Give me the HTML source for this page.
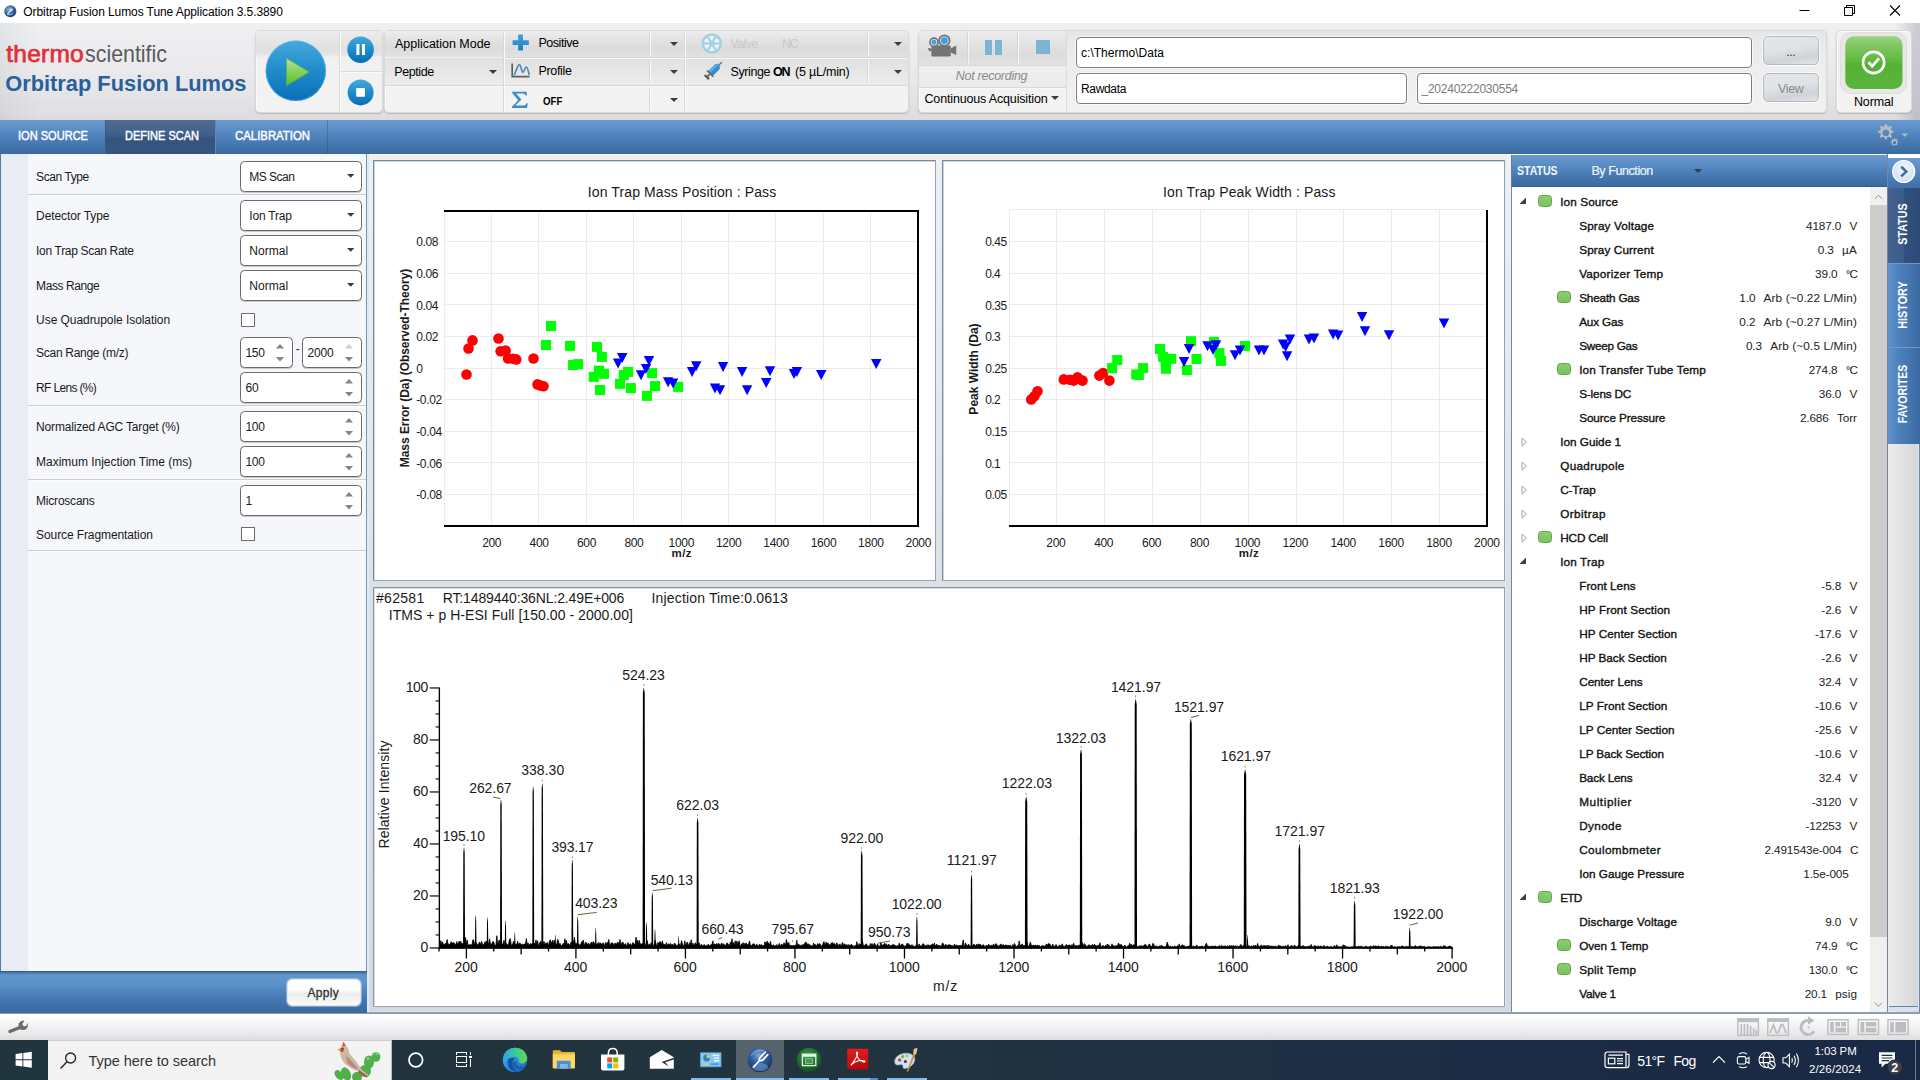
<!DOCTYPE html>
<html><head><meta charset="utf-8"><title>Orbitrap Fusion Lumos Tune Application</title>
<style>
html,body{margin:0;padding:0;}
body{width:1920px;height:1080px;overflow:hidden;position:relative;background:#eeeef0;font-family:'Liberation Sans',sans-serif;}
div,span,svg{box-sizing:border-box;}
svg{position:absolute;overflow:visible;}
</style></head><body>
<div style="position:absolute;left:0px;top:0px;width:1920px;height:23px;background:#fff;"></div>
<svg style="left:2.6px;top:3.5px" width="14.6" height="14.6" viewBox="0 0 17 17"><defs><radialGradient id="ai" cx="40%" cy="35%" r="70%"><stop offset="0" stop-color="#8fb6dd"/><stop offset="0.6" stop-color="#2e5f97"/><stop offset="1" stop-color="#1b3d6b"/></radialGradient></defs><circle cx="8.5" cy="8.5" r="7" fill="url(#ai)"/><path d="M5.5 11.5 L8 8.5 L9.5 5.5 M8 8.5 L11 6.5" stroke="#e8f0fa" stroke-width="1.2" fill="none" stroke-linecap="round"/><path d="M5 12.2 q3 1.2 6.5 -1" stroke="#cfe0f2" stroke-width="0.8" fill="none"/></svg>
<span style="position:absolute;left:23.30px;top:6.00px;font-size:12px;line-height:12px;white-space:pre;letter-spacing:-0.085px;color:#000;">Orbitrap Fusion Lumos Tune Application 3.5.3890</span>
<svg style="left:1790px;top:0" width="120" height="23" viewBox="0 0 120 23"><path d="M9.5 10.5 H19.5" stroke="#000" stroke-width="1"/><path d="M54.5 7.5 H62.5 V15.5 H54.5 Z M56.5 7.5 V5.5 H64.5 V13.5 H62.5" stroke="#000" stroke-width="1" fill="none"/><path d="M100 5.5 L110 15.5 M110 5.5 L100 15.5" stroke="#000" stroke-width="1.1"/></svg>
<div style="position:absolute;left:0px;top:23px;width:1920px;height:97px;background:linear-gradient(180deg,#eff0f2 0%,#ececee 35%,#e6e6e8 70%,#dddde0 100%);"></div>
<div style="position:absolute;left:0px;top:23px;width:1920px;height:97px;background:linear-gradient(90deg,rgba(120,125,135,.10) 0,rgba(120,125,135,0) 40px,rgba(120,125,135,0) 1895px,rgba(120,125,135,.30) 1916px);"></div>
<span style="position:absolute;left:6.30px;top:42.00px;font-size:24.5px;line-height:24.5px;white-space:pre;letter-spacing:0.222px;color:#e0303a;-webkit-text-stroke:0.75px #e0303a;">thermo</span>
<span style="position:absolute;left:85.30px;top:42.00px;font-size:24.5px;line-height:24.5px;white-space:pre;letter-spacing:0.000px;color:#5a5a5c;transform:scaleX(0.8728);transform-origin:0 0;">scientific</span>
<span style="position:absolute;left:5.20px;top:73.00px;font-size:21.8px;line-height:21.8px;white-space:pre;letter-spacing:0.015px;color:#28609b;font-weight:700;">Orbitrap Fusion Lumos</span>
<div style="position:absolute;left:255px;top:30px;width:128px;height:83px;border:1px solid #d9d9d9;border-radius:5px;background:linear-gradient(180deg,#efefef 0,#f3f3f3 100%);box-shadow:0 1px 0 #fbfbfb inset,1px 0 0 #fbfbfb inset,0 1px 1.5px rgba(0,0,0,.18);"></div>
<div style="position:absolute;left:256px;top:31px;width:126px;height:26px;background:linear-gradient(180deg,#ececec,#e0e0e0 70%,#e4e4e4 90%,#efefef);border-radius:4px 4px 0 0;"></div>
<div style="position:absolute;left:339px;top:31px;width:1px;height:81px;background:#dcdcdc;box-shadow:1px 0 0 #fafafa;"></div>
<div style="position:absolute;left:340px;top:71px;width:42px;height:1px;background:#dcdcdc;box-shadow:0 1px 0 #fafafa;"></div>
<svg style="left:262px;top:37px" width="68" height="68" viewBox="0 0 68 68"><defs>
<linearGradient id="pb" x1="0" y1="0" x2="0" y2="1"><stop offset="0" stop-color="#46a9dc"/><stop offset="0.5" stop-color="#1f8ccc"/><stop offset="1" stop-color="#0a6db6"/></linearGradient>
<linearGradient id="pg" x1="0" y1="0" x2="0" y2="1"><stop offset="0" stop-color="#b9e3a4"/><stop offset="0.55" stop-color="#7fce55"/><stop offset="1" stop-color="#5cbb2f"/></linearGradient></defs>
<circle cx="33.8" cy="33.8" r="30.2" fill="url(#pb)"/><circle cx="33.8" cy="33.8" r="29.7" fill="none" stroke="#5cc4ee" stroke-opacity=".55" stroke-width="1"/>
<path d="M24.5 21.3 L47.2 35 L24.5 48.6 Z" fill="url(#pg)" stroke="#58b733" stroke-width="0.8" stroke-linejoin="round"/></svg>
<svg style="left:346px;top:35px" width="30" height="30" viewBox="0 0 30 30"><circle cx="14.6" cy="14.7" r="13.3" fill="url(#pb)"/><rect x="10.4" y="9" width="3" height="11" fill="#fff"/><rect x="16" y="9" width="3" height="11" fill="#fff"/></svg>
<svg style="left:346px;top:78px" width="30" height="30" viewBox="0 0 30 30"><circle cx="14.6" cy="14.4" r="13" fill="url(#pb)"/><rect x="10.2" y="10" width="8.8" height="8.8" rx="0.8" fill="#fff"/></svg>
<div style="position:absolute;left:384px;top:30px;width:525px;height:83px;border:1px solid #d9d9d9;border-radius:5px;background:linear-gradient(180deg,#efefef 0,#f3f3f3 100%);box-shadow:0 1px 0 #fbfbfb inset,1px 0 0 #fbfbfb inset,0 1px 1.5px rgba(0,0,0,.18);"></div>
<div style="position:absolute;left:385px;top:31px;width:523px;height:26px;background:linear-gradient(180deg,#ededed 0,#e3e3e3 35%,#dcdcdc 62%,#dedede 85%,#e3e3e3 100%);border-radius:4px 4px 0 0;"></div>
<div style="position:absolute;left:385px;top:58px;width:523px;height:27px;background:linear-gradient(180deg,#e1e1e1,#e6e6e6 50%,#ececec);"></div>
<div style="position:absolute;left:504px;top:57px;width:404px;height:1px;background:#d6d6d6;box-shadow:0 1px 0 #f8f8f8;"></div>
<div style="position:absolute;left:385px;top:85px;width:523px;height:1px;background:#d6d6d6;box-shadow:0 1px 0 #f8f8f8;"></div>
<div style="position:absolute;left:503px;top:31px;width:1px;height:81px;background:#d8d8d8;box-shadow:1px 0 0 #fafafa;"></div>
<div style="position:absolute;left:684px;top:31px;width:1px;height:81px;background:#d8d8d8;box-shadow:1px 0 0 #fafafa;"></div>
<div style="position:absolute;left:649px;top:33px;width:1px;height:23px;background:#d8d8d8;box-shadow:1px 0 0 #fafafa;"></div>
<div style="position:absolute;left:649px;top:60px;width:1px;height:23px;background:#d8d8d8;box-shadow:1px 0 0 #fafafa;"></div>
<div style="position:absolute;left:649px;top:88px;width:1px;height:23px;background:#d8d8d8;box-shadow:1px 0 0 #fafafa;"></div>
<div style="position:absolute;left:867px;top:33px;width:1px;height:23px;background:#d8d8d8;box-shadow:1px 0 0 #fafafa;"></div>
<div style="position:absolute;left:867px;top:60px;width:1px;height:23px;background:#d8d8d8;box-shadow:1px 0 0 #fafafa;"></div>
<span style="position:absolute;left:395.00px;top:38.00px;font-size:12.5px;line-height:12.5px;white-space:pre;letter-spacing:-0.025px;color:#000;">Application Mode</span>
<span style="position:absolute;left:394.30px;top:66.00px;font-size:12.5px;line-height:12.5px;white-space:pre;letter-spacing:-0.415px;color:#000;">Peptide</span>
<svg style="left:489.2px;top:70.2px" width="8" height="4" viewBox="0 0 8 4"><path d="M0 0 H8 L4 4 Z" fill="#3c3c3c"/></svg>
<svg style="left:669.7px;top:42.0px" width="8" height="4" viewBox="0 0 8 4"><path d="M0 0 H8 L4 4 Z" fill="#3c3c3c"/></svg>
<svg style="left:669.7px;top:70.0px" width="8" height="4" viewBox="0 0 8 4"><path d="M0 0 H8 L4 4 Z" fill="#3c3c3c"/></svg>
<svg style="left:669.7px;top:97.7px" width="8" height="4" viewBox="0 0 8 4"><path d="M0 0 H8 L4 4 Z" fill="#3c3c3c"/></svg>
<svg style="left:893.7px;top:42.0px" width="8" height="4" viewBox="0 0 8 4"><path d="M0 0 H8 L4 4 Z" fill="#3c3c3c"/></svg>
<svg style="left:893.7px;top:69.5px" width="8" height="4" viewBox="0 0 8 4"><path d="M0 0 H8 L4 4 Z" fill="#3c3c3c"/></svg>
<svg style="left:512px;top:34px" width="18" height="18" viewBox="0 0 18 18"><defs><linearGradient id="pl" x1="0" y1="0" x2="0" y2="1"><stop offset="0" stop-color="#3ea2df"/><stop offset="1" stop-color="#1b7fc4"/></linearGradient></defs><path d="M6.2 0.6 H11 V6.2 H16.8 V11 H11 V16.6 H6.2 V11 H0.6 V6.2 H6.2 Z" fill="url(#pl)"/></svg>
<span style="position:absolute;left:538.50px;top:37.00px;font-size:12.5px;line-height:12.5px;white-space:pre;letter-spacing:-0.473px;color:#000;">Positive</span>
<svg style="left:510px;top:62px" width="22" height="18" viewBox="0 0 22 18"><path d="M2.2 1.6 V14.6 H19.6" stroke="#5f5f5f" stroke-width="1.7" fill="none"/><path d="M4.2 13 C6 10 7.6 2.6 9.4 2.6 C11 2.6 11.6 10.4 13 10.4 C14.2 10.4 14.8 5 16.2 5 C17.6 5 18.4 10 19.4 13" stroke="#4a86bd" stroke-width="1.6" fill="none" stroke-linejoin="round"/></svg>
<span style="position:absolute;left:538.50px;top:65.00px;font-size:12.5px;line-height:12.5px;white-space:pre;letter-spacing:-0.348px;color:#000;">Profile</span>
<svg style="left:511px;top:91px" width="18" height="18" viewBox="0 0 18 18"><path d="M1.2 0.8 H15.5 L16 4.4 H14.8 Q14.2 2.6 12 2.6 H5 L10.4 8.6 L4.4 14.6 H12.6 Q15 14.6 15.6 12.2 H16.8 L16 17 H1 V15.8 L7.2 9.2 L1.2 2 Z" fill="#3a8bc8"/></svg>
<span style="position:absolute;left:542.80px;top:96.00px;font-size:11px;line-height:11px;white-space:pre;letter-spacing:0.000px;color:#000;font-weight:700;transform:scaleX(0.8773);transform-origin:0 0;">OFF</span>
<svg style="left:700px;top:32px" width="24" height="24" viewBox="0 0 24 24"><circle cx="11.8" cy="11.5" r="9" fill="#e9f3f9" stroke="#a3cfe5" stroke-width="2.4"/><g stroke="#a3cfe5" stroke-width="2.1"><path d="M11.8 11.5 L16.4 3.6"/><path d="M11.8 11.5 L20.9 11.5"/><path d="M11.8 11.5 L16.4 19.4"/><path d="M11.8 11.5 L7.2 19.4"/><path d="M11.8 11.5 L2.7 11.5"/><path d="M11.8 11.5 L7.2 3.6"/></g><circle cx="11.8" cy="11.5" r="2.7" fill="#a3cfe5"/><circle cx="11.8" cy="11.5" r="1.2" fill="#a9dcb9"/></svg>
<span style="position:absolute;left:730.30px;top:38.00px;font-size:12.5px;line-height:12.5px;white-space:pre;letter-spacing:-0.569px;color:#c9c9c9;">Valve</span>
<span style="position:absolute;left:782.00px;top:38.00px;font-size:12.5px;line-height:12.5px;white-space:pre;letter-spacing:-1.281px;color:#c9c9c9;">NC</span>
<svg style="left:702px;top:60px" width="22" height="22" viewBox="0 0 22 22"><g transform="rotate(45 11 11)"><rect x="10.3" y="-1.5" width="1.4" height="4.5" fill="#6e6e6e"/><rect x="8.8" y="2.6" width="4.4" height="1.5" fill="#4b95cc"/><rect x="7.7" y="4" width="6.6" height="10" rx="0.8" fill="#2d8fd2"/><rect x="8.3" y="4.6" width="2" height="8.8" fill="#5eb0e4"/><rect x="6.7" y="14" width="8.6" height="1.6" fill="#5a5a5a"/><rect x="10" y="15.6" width="2" height="3.2" fill="#6e6e6e"/><rect x="8" y="18.6" width="6" height="2.2" fill="#555"/></g></svg>
<span style="position:absolute;left:730.60px;top:66.00px;font-size:12.5px;line-height:12.5px;white-space:pre;letter-spacing:-0.413px;color:#000;">Syringe</span>
<span style="position:absolute;left:773.00px;top:66.00px;font-size:12.5px;line-height:12.5px;white-space:pre;letter-spacing:-1.125px;color:#000;font-weight:700;">ON</span>
<span style="position:absolute;left:795.00px;top:66.00px;font-size:12.5px;line-height:12.5px;white-space:pre;letter-spacing:-0.203px;color:#000;">(5 µL/min)</span>
<div style="position:absolute;left:918px;top:30px;width:909px;height:83px;border:1px solid #d9d9d9;border-radius:5px;background:linear-gradient(180deg,#efefef 0,#f3f3f3 100%);box-shadow:0 1px 0 #fbfbfb inset,1px 0 0 #fbfbfb inset,0 1px 1.5px rgba(0,0,0,.18);"></div>
<div style="position:absolute;left:919px;top:31px;width:147px;height:34px;background:linear-gradient(180deg,#ececec,#e1e1e1 45%,#dcdcdc 70%,#e2e2e2);border-radius:4px 0 0 0;"></div>
<div style="position:absolute;left:919px;top:65px;width:147px;height:1px;background:#d9d9d9;box-shadow:0 1px 0 #f8f8f8;"></div>
<div style="position:absolute;left:919px;top:66px;width:147px;height:21px;background:linear-gradient(180deg,#efefef,#ebebeb);"></div>
<div style="position:absolute;left:919px;top:87px;width:147px;height:1px;background:#d9d9d9;box-shadow:0 1px 0 #f8f8f8;"></div>
<div style="position:absolute;left:967px;top:31px;width:1px;height:34px;background:#d6d6d6;box-shadow:1px 0 0 #f6f6f6;"></div>
<div style="position:absolute;left:1017px;top:31px;width:1px;height:34px;background:#d6d6d6;box-shadow:1px 0 0 #f6f6f6;"></div>
<div style="position:absolute;left:1066px;top:31px;width:1px;height:81px;background:#dcdcdc;box-shadow:1px 0 0 #fafafa;"></div>
<div style="position:absolute;left:1067px;top:31px;width:759px;height:81px;background:linear-gradient(180deg,#e6e6e6,#ededed 40%,#f1f1f1);border-radius:0 4px 4px 0;"></div>
<svg style="left:926px;top:33px" width="32" height="26" viewBox="0 0 32 26"><g fill="#737373"><circle cx="8" cy="9.2" r="4.9"/><circle cx="18.4" cy="7.6" r="6.1"/><rect x="5.4" y="12.6" width="19.4" height="11" rx="1.4"/><path d="M24.6 15.6 L30.2 12.4 V22 L24.6 19.4 Z"/><path d="M1.6 15 L5.6 15.6 V18.6 L3.2 18 Z"/></g><circle cx="8" cy="9.2" r="3.3" fill="#c4e2f6"/><circle cx="18.4" cy="7.6" r="4.4" fill="#c4e2f6"/><circle cx="8" cy="9.2" r="2.4" fill="#3d9fe0"/><circle cx="18.4" cy="7.6" r="3.4" fill="#3d9fe0"/></svg>
<div style="position:absolute;left:985px;top:39.5px;width:7px;height:15px;background:#7fb3d4;"></div>
<div style="position:absolute;left:995px;top:39.5px;width:7px;height:15px;background:#7fb3d4;"></div>
<div style="position:absolute;left:1036px;top:40px;width:14px;height:14px;background:#7fb3d4;"></div>
<span style="position:absolute;left:955.75px;top:70.00px;font-size:12.5px;line-height:12.5px;white-space:pre;letter-spacing:-0.273px;color:#8a8a8a;font-style:italic;">Not recording</span>
<span style="position:absolute;left:924.50px;top:93.00px;font-size:12.5px;line-height:12.5px;white-space:pre;letter-spacing:-0.158px;color:#000;">Continuous Acquisition</span>
<svg style="left:1051.3px;top:96.3px" width="8" height="4" viewBox="0 0 8 4"><path d="M0 0 H8 L4 4 Z" fill="#3c3c3c"/></svg>
<div style="position:absolute;left:1076px;top:37px;width:676px;height:31px;background:#fff;border:1px solid #7f7f7f;border-radius:4px;box-shadow:0 0 0 1px rgba(255,255,255,.6);"></div>
<div style="position:absolute;left:1076px;top:73px;width:331px;height:31px;background:#fff;border:1px solid #7f7f7f;border-radius:4px;box-shadow:0 0 0 1px rgba(255,255,255,.6);"></div>
<div style="position:absolute;left:1417px;top:73px;width:335px;height:31px;background:#fff;border:1px solid #7f7f7f;border-radius:4px;box-shadow:0 0 0 1px rgba(255,255,255,.6);"></div>
<span style="position:absolute;left:1081.00px;top:47.00px;font-size:12px;line-height:12px;white-space:pre;letter-spacing:0.021px;color:#000;">c:\Thermo\Data</span>
<span style="position:absolute;left:1081.00px;top:83.00px;font-size:12px;line-height:12px;white-space:pre;letter-spacing:-0.339px;color:#000;">Rawdata</span>
<span style="position:absolute;left:1421.50px;top:83.00px;font-size:12px;line-height:12px;white-space:pre;letter-spacing:-0.241px;color:#7b7b7b;">_20240222030554</span>
<div style="position:absolute;left:1763px;top:36px;width:56px;height:29px;border:1px solid #b5bac1;border-radius:5px;background:linear-gradient(170deg,#e4e7ea 0,#dfe2e6 45%,#cfd3d8 75%,#e2e5e8 100%);box-shadow:0 0 0 1px rgba(255,255,255,.7);"></div>
<div style="position:absolute;left:1763px;top:73px;width:56px;height:29px;border:1px solid #b5bac1;border-radius:5px;background:linear-gradient(170deg,#e4e7ea 0,#dfe2e6 45%,#cfd3d8 75%,#e2e5e8 100%);box-shadow:0 0 0 1px rgba(255,255,255,.7);"></div>
<span style="position:absolute;left:1786.30px;top:46.00px;font-size:12px;line-height:12px;white-space:pre;letter-spacing:-0.339px;color:#333;">...</span>
<span style="position:absolute;left:1778.05px;top:83.00px;font-size:12.5px;line-height:12.5px;white-space:pre;letter-spacing:-0.344px;color:#8a8a8a;">View</span>
<div style="position:absolute;left:1836px;top:30px;width:76px;height:83px;border:1px solid #d9d9d9;border-radius:5px;background:linear-gradient(180deg,#efefef 0,#f3f3f3 100%);box-shadow:0 1px 0 #fbfbfb inset,1px 0 0 #fbfbfb inset,0 1px 1.5px rgba(0,0,0,.18);"></div>
<div style="position:absolute;left:1840px;top:32px;width:67px;height:62px;border-radius:11px;background:#e7e7e7;border:1px solid #dedede;"></div>
<svg style="left:1845px;top:36px" width="58" height="54" viewBox="0 0 58 54"><defs><linearGradient id="ng" x1="0" y1="0" x2="0" y2="1"><stop offset="0" stop-color="#9ed488"/><stop offset="0.12" stop-color="#86ca6a"/><stop offset="0.5" stop-color="#5cb73a"/><stop offset="0.52" stop-color="#54b232"/><stop offset="1" stop-color="#5db53e"/></linearGradient></defs><rect x="0.3" y="0.3" width="57.2" height="52.6" rx="8.5" fill="url(#ng)"/><circle cx="28.6" cy="26.5" r="10.6" fill="none" stroke="#fff" stroke-width="2.6"/><path d="M23.4 26.3 L27.2 30.2 L34 22.4" stroke="#fff" stroke-width="2.7" fill="none"/></svg>
<span style="position:absolute;left:1853.95px;top:96.00px;font-size:12.5px;line-height:12.5px;white-space:pre;letter-spacing:-0.133px;color:#000;">Normal</span>
<div style="position:absolute;left:0px;top:120px;width:1920px;height:34px;background:linear-gradient(180deg,#6a9bd0 0,#5b8fc7 25%,#4a7db6 60%,#39699f 100%);"></div>
<div style="position:absolute;left:106px;top:120px;width:109px;height:34px;background:linear-gradient(180deg,#506c92 0,#3f5e89 45%,#34547e 55%,#36567f 100%);"></div>
<div style="position:absolute;left:105px;top:120px;width:1px;height:34px;background:#365a8a;"></div>
<div style="position:absolute;left:215px;top:120px;width:1px;height:34px;background:#5d88bb;"></div>
<div style="position:absolute;left:327px;top:120px;width:1px;height:34px;background:rgba(40,70,110,.35);"></div>
<span style="position:absolute;left:18.40px;top:130.00px;font-size:12.5px;line-height:12.5px;white-space:pre;letter-spacing:0.000px;color:#fff;-webkit-text-stroke:0.45px #fff;transform:scaleX(0.8840);transform-origin:0 0;">ION SOURCE</span>
<span style="position:absolute;left:124.50px;top:130.00px;font-size:12.5px;line-height:12.5px;white-space:pre;letter-spacing:0.000px;color:#fff;-webkit-text-stroke:0.45px #fff;transform:scaleX(0.8805);transform-origin:0 0;">DEFINE SCAN</span>
<span style="position:absolute;left:234.60px;top:130.00px;font-size:12.5px;line-height:12.5px;white-space:pre;letter-spacing:0.000px;color:#fff;-webkit-text-stroke:0.45px #fff;transform:scaleX(0.9100);transform-origin:0 0;">CALIBRATION</span>
<svg style="left:1874px;top:122px" width="40" height="30" viewBox="0 0 40 30"><g fill="#b7bcbf"><path d="M11 2 l1.6 0 l.5 2.1 l1.7 .7 l1.9-1.1 l1.2 1.2 l-1.1 1.9 l.7 1.7 l2.1 .5 l0 1.6 l-2.1 .5 l-.7 1.7 l1.1 1.9 l-1.2 1.2 l-1.9-1.1 l-1.7 .7 l-.5 2.1 l-1.6 0 l-.5-2.1 l-1.7-.7 l-1.9 1.1 l-1.2-1.2 l1.1-1.9 l-.7-1.7 l-2.1-.5 l0-1.6 l2.1-.5 l.7-1.7 l-1.1-1.9 l1.2-1.2 l1.9 1.1 l1.7-.7 Z M11.8 7.4 a3.4 3.4 0 1 0 .01 0 Z" fill-rule="evenodd"/><g transform="translate(14.6,15.2) scale(0.5)"><path d="M11 2 l1.6 0 l.5 2.1 l1.7 .7 l1.9-1.1 l1.2 1.2 l-1.1 1.9 l.7 1.7 l2.1 .5 l0 1.6 l-2.1 .5 l-.7 1.7 l1.1 1.9 l-1.2 1.2 l-1.9-1.1 l-1.7 .7 l-.5 2.1 l-1.6 0 l-.5-2.1 l-1.7-.7 l-1.9 1.1 l-1.2-1.2 l1.1-1.9 l-.7-1.7 l-2.1-.5 l0-1.6 l2.1-.5 l.7-1.7 l-1.1-1.9 l1.2-1.2 l1.9 1.1 l1.7-.7 Z M11.8 7.4 a3.4 3.4 0 1 0 .01 0 Z" fill-rule="evenodd"/></g><path d="M27.5 11.6 H34 L30.7 14.8 Z"/></g></svg>
<div style="position:absolute;left:0px;top:154px;width:367px;height:817px;background:#f5f7fa;border-left:1px solid #4a7cb5;border-right:1px solid #7c93ad;"></div>
<div style="position:absolute;left:1px;top:154px;width:27px;height:817px;background:#e9ecf2;"></div>
<div style="position:absolute;left:367px;top:154px;width:2px;height:859px;background:#dcebfa;"></div>
<span style="position:absolute;left:36.10px;top:171.00px;font-size:12px;line-height:12px;white-space:pre;letter-spacing:-0.420px;color:#1a1a1a;">Scan Type</span>
<span style="position:absolute;left:36.10px;top:210.00px;font-size:12px;line-height:12px;white-space:pre;letter-spacing:-0.099px;color:#1a1a1a;">Detector Type</span>
<span style="position:absolute;left:36.10px;top:245.00px;font-size:12px;line-height:12px;white-space:pre;letter-spacing:-0.323px;color:#1a1a1a;">Ion Trap Scan Rate</span>
<span style="position:absolute;left:36.10px;top:280.00px;font-size:12px;line-height:12px;white-space:pre;letter-spacing:-0.417px;color:#1a1a1a;">Mass Range</span>
<span style="position:absolute;left:36.10px;top:314.00px;font-size:12px;line-height:12px;white-space:pre;letter-spacing:-0.059px;color:#1a1a1a;">Use Quadrupole Isolation</span>
<span style="position:absolute;left:36.10px;top:347.00px;font-size:12px;line-height:12px;white-space:pre;letter-spacing:-0.294px;color:#1a1a1a;">Scan Range (m/z)</span>
<span style="position:absolute;left:36.10px;top:382.00px;font-size:12px;line-height:12px;white-space:pre;letter-spacing:-0.669px;color:#1a1a1a;">RF Lens (%)</span>
<span style="position:absolute;left:36.10px;top:421.00px;font-size:12px;line-height:12px;white-space:pre;letter-spacing:-0.173px;color:#1a1a1a;">Normalized AGC Target (%)</span>
<span style="position:absolute;left:36.10px;top:456.00px;font-size:12px;line-height:12px;white-space:pre;letter-spacing:-0.026px;color:#1a1a1a;">Maximum Injection Time (ms)</span>
<span style="position:absolute;left:36.10px;top:495.00px;font-size:12px;line-height:12px;white-space:pre;letter-spacing:-0.219px;color:#1a1a1a;">Microscans</span>
<span style="position:absolute;left:36.10px;top:529.00px;font-size:12px;line-height:12px;white-space:pre;letter-spacing:-0.102px;color:#1a1a1a;">Source Fragmentation</span>
<div style="position:absolute;left:28px;top:194px;width:338px;height:1px;background:#c9ccd1;box-shadow:0 1px 0 #fbfcfd;"></div>
<div style="position:absolute;left:28px;top:405px;width:338px;height:1px;background:#c9ccd1;box-shadow:0 1px 0 #fbfcfd;"></div>
<div style="position:absolute;left:28px;top:479px;width:338px;height:1px;background:#c9ccd1;box-shadow:0 1px 0 #fbfcfd;"></div>
<div style="position:absolute;left:28px;top:550px;width:338px;height:1px;background:#c9ccd1;box-shadow:0 1px 0 #fbfcfd;"></div>
<div style="position:absolute;left:240px;top:161px;width:122px;height:31px;background:#fff;border:1px solid #6a6a6a;border-radius:4.5px;box-shadow:0 1px 0.5px rgba(0,0,0,.18);"></div>
<span style="position:absolute;left:249.30px;top:171.00px;font-size:12px;line-height:12px;white-space:pre;letter-spacing:-0.527px;color:#1a1a1a;">MS Scan</span>
<svg style="left:347.3px;top:174.29999999999998px" width="7.4" height="3.8" viewBox="0 0 7.4 3.8"><path d="M0 0 H7.4 L3.7 3.8 Z" fill="#3c3c3c"/></svg>
<div style="position:absolute;left:240px;top:200px;width:122px;height:31px;background:#fff;border:1px solid #6a6a6a;border-radius:4.5px;box-shadow:0 1px 0.5px rgba(0,0,0,.18);"></div>
<span style="position:absolute;left:249.30px;top:210.00px;font-size:12px;line-height:12px;white-space:pre;letter-spacing:-0.191px;color:#1a1a1a;">Ion Trap</span>
<svg style="left:347.3px;top:213.29999999999998px" width="7.4" height="3.8" viewBox="0 0 7.4 3.8"><path d="M0 0 H7.4 L3.7 3.8 Z" fill="#3c3c3c"/></svg>
<div style="position:absolute;left:240px;top:235px;width:122px;height:31px;background:#fff;border:1px solid #6a6a6a;border-radius:4.5px;box-shadow:0 1px 0.5px rgba(0,0,0,.18);"></div>
<span style="position:absolute;left:249.30px;top:245.00px;font-size:12px;line-height:12px;white-space:pre;letter-spacing:0.055px;color:#1a1a1a;">Normal</span>
<svg style="left:347.3px;top:248.29999999999998px" width="7.4" height="3.8" viewBox="0 0 7.4 3.8"><path d="M0 0 H7.4 L3.7 3.8 Z" fill="#3c3c3c"/></svg>
<div style="position:absolute;left:240px;top:270px;width:122px;height:31px;background:#fff;border:1px solid #6a6a6a;border-radius:4.5px;box-shadow:0 1px 0.5px rgba(0,0,0,.18);"></div>
<span style="position:absolute;left:249.30px;top:280.00px;font-size:12px;line-height:12px;white-space:pre;letter-spacing:0.055px;color:#1a1a1a;">Normal</span>
<svg style="left:347.3px;top:283.3px" width="7.4" height="3.8" viewBox="0 0 7.4 3.8"><path d="M0 0 H7.4 L3.7 3.8 Z" fill="#3c3c3c"/></svg>
<div style="position:absolute;left:241px;top:312.5px;width:14px;height:14px;background:#fff;border:1px solid #6a6a6a;"></div>
<div style="position:absolute;left:241px;top:527px;width:14px;height:14px;background:#fff;border:1px solid #6a6a6a;"></div>
<div style="position:absolute;left:240px;top:337px;width:53px;height:31px;background:#fff;border:1px solid #6a6a6a;border-radius:4.5px;box-shadow:0 1px 0.5px rgba(0,0,0,.18);"></div>
<span style="position:absolute;left:245.50px;top:347.00px;font-size:12px;line-height:12px;white-space:pre;letter-spacing:-0.344px;color:#1a1a1a;">150</span>
<svg style="left:276px;top:343.95px" width="8" height="4.5" viewBox="0 0 8 4.5"><path d="M0 4.5 H8 L4 0 Z" fill="#858585"/></svg>
<svg style="left:276px;top:356.95px" width="8" height="4.5" viewBox="0 0 8 4.5"><path d="M0 0 H8 L4 4.5 Z" fill="#858585"/></svg>
<div style="position:absolute;left:302px;top:337px;width:60px;height:31px;background:#fff;border:1px solid #6a6a6a;border-radius:4.5px;box-shadow:0 1px 0.5px rgba(0,0,0,.18);"></div>
<span style="position:absolute;left:307.50px;top:347.00px;font-size:12px;line-height:12px;white-space:pre;letter-spacing:-0.176px;color:#1a1a1a;">2000</span>
<svg style="left:345px;top:343.95px" width="8" height="4.5" viewBox="0 0 8 4.5"><path d="M0 4.5 H8 L4 0 Z" fill="#cfcfcf"/></svg>
<svg style="left:345px;top:356.95px" width="8" height="4.5" viewBox="0 0 8 4.5"><path d="M0 0 H8 L4 4.5 Z" fill="#858585"/></svg>
<span style="position:absolute;left:295.72px;top:343.00px;font-size:12px;line-height:12px;white-space:pre;letter-spacing:-0.240px;color:#333;">-</span>
<div style="position:absolute;left:240px;top:372px;width:122px;height:31px;background:#fff;border:1px solid #6a6a6a;border-radius:4.5px;box-shadow:0 1px 0.5px rgba(0,0,0,.18);"></div>
<span style="position:absolute;left:245.50px;top:382.00px;font-size:12px;line-height:12px;white-space:pre;letter-spacing:-0.180px;color:#1a1a1a;">60</span>
<svg style="left:345px;top:378.95px" width="8" height="4.5" viewBox="0 0 8 4.5"><path d="M0 4.5 H8 L4 0 Z" fill="#858585"/></svg>
<svg style="left:345px;top:391.95px" width="8" height="4.5" viewBox="0 0 8 4.5"><path d="M0 0 H8 L4 4.5 Z" fill="#858585"/></svg>
<div style="position:absolute;left:240px;top:411px;width:122px;height:31px;background:#fff;border:1px solid #6a6a6a;border-radius:4.5px;box-shadow:0 1px 0.5px rgba(0,0,0,.18);"></div>
<span style="position:absolute;left:245.50px;top:421.00px;font-size:12px;line-height:12px;white-space:pre;letter-spacing:-0.344px;color:#1a1a1a;">100</span>
<svg style="left:345px;top:417.95px" width="8" height="4.5" viewBox="0 0 8 4.5"><path d="M0 4.5 H8 L4 0 Z" fill="#858585"/></svg>
<svg style="left:345px;top:430.95px" width="8" height="4.5" viewBox="0 0 8 4.5"><path d="M0 0 H8 L4 4.5 Z" fill="#858585"/></svg>
<div style="position:absolute;left:240px;top:446px;width:122px;height:31px;background:#fff;border:1px solid #6a6a6a;border-radius:4.5px;box-shadow:0 1px 0.5px rgba(0,0,0,.18);"></div>
<span style="position:absolute;left:245.50px;top:456.00px;font-size:12px;line-height:12px;white-space:pre;letter-spacing:-0.344px;color:#1a1a1a;">100</span>
<svg style="left:345px;top:452.95px" width="8" height="4.5" viewBox="0 0 8 4.5"><path d="M0 4.5 H8 L4 0 Z" fill="#858585"/></svg>
<svg style="left:345px;top:465.95px" width="8" height="4.5" viewBox="0 0 8 4.5"><path d="M0 0 H8 L4 4.5 Z" fill="#858585"/></svg>
<div style="position:absolute;left:240px;top:485px;width:122px;height:31px;background:#fff;border:1px solid #6a6a6a;border-radius:4.5px;box-shadow:0 1px 0.5px rgba(0,0,0,.18);"></div>
<span style="position:absolute;left:245.50px;top:495.00px;font-size:12px;line-height:12px;white-space:pre;letter-spacing:-1.688px;color:#1a1a1a;">1</span>
<svg style="left:345px;top:491.95px" width="8" height="4.5" viewBox="0 0 8 4.5"><path d="M0 4.5 H8 L4 0 Z" fill="#858585"/></svg>
<svg style="left:345px;top:504.95px" width="8" height="4.5" viewBox="0 0 8 4.5"><path d="M0 0 H8 L4 4.5 Z" fill="#858585"/></svg>
<div style="position:absolute;left:0px;top:971px;width:367px;height:42px;background:linear-gradient(180deg,#3f6fa8 0,#6196cd 3px,#5b90c8 30%,#4579b3 65%,#38689f 100%);border-top:1px solid #2f5f98;"></div>
<div style="position:absolute;left:286.5px;top:979px;width:74px;height:26.5px;background:linear-gradient(180deg,#fff 0,#fdfdfd 40%,#ececec 55%,#fafafa 100%);border:1px solid #dfe5ec;border-radius:5px;box-shadow:0 0 0 1px rgba(255,255,255,.35);"></div>
<span style="position:absolute;left:307.55px;top:987.00px;font-size:12px;line-height:12px;white-space:pre;letter-spacing:0.294px;color:#333;-webkit-text-stroke:0.3px #333;">Apply</span>
<div style="position:absolute;left:369px;top:154px;width:1142px;height:859px;background:linear-gradient(180deg,#f0f0f2 0,#e9e9eb 25%,#dfe0e2 50%,#dbdcdf 75%,#d8d9dc 100%);"></div>
<div style="position:absolute;left:369px;top:154px;width:1518px;height:1px;background:#f6f8fb;"></div>
<div style="position:absolute;left:369px;top:1011px;width:1142px;height:1px;background:#d6e4f4;"></div>
<div style="position:absolute;left:373px;top:160px;width:563px;height:421px;background:#fff;border:1px solid #6f8aa8;border-right-color:#8fa3ba;border-bottom-color:#96a7bb;box-shadow:1px 1px 0 #c9d6e4 inset;"></div>
<div style="position:absolute;left:942px;top:160px;width:563px;height:421px;background:#fff;border:1px solid #6f8aa8;border-right-color:#8fa3ba;border-bottom-color:#96a7bb;box-shadow:1px 1px 0 #c9d6e4 inset;"></div>
<span style="position:absolute;left:587.80px;top:185.00px;font-size:14px;line-height:14px;white-space:pre;letter-spacing:0.114px;color:#1a1a1a;">Ion Trap Mass Position : Pass</span>
<span style="position:absolute;left:1163.00px;top:185.00px;font-size:14px;line-height:14px;white-space:pre;letter-spacing:0.110px;color:#1a1a1a;">Ion Trap Peak Width : Pass</span>
<svg style="left:0;top:0" width="1920" height="600" viewBox="0 0 1920 600" shape-rendering="crispEdges"><rect x="444" y="210" width="1" height="316" fill="#ebebed"/><rect x="491" y="210" width="1" height="316" fill="#ebebed"/><rect x="538" y="210" width="1" height="316" fill="#ebebed"/><rect x="586" y="210" width="1" height="316" fill="#ebebed"/><rect x="633" y="210" width="1" height="316" fill="#ebebed"/><rect x="681" y="210" width="1" height="316" fill="#ebebed"/><rect x="728" y="210" width="1" height="316" fill="#ebebed"/><rect x="775" y="210" width="1" height="316" fill="#ebebed"/><rect x="823" y="210" width="1" height="316" fill="#ebebed"/><rect x="870" y="210" width="1" height="316" fill="#ebebed"/><rect x="444" y="494" width="474" height="1" fill="#ebebed"/><rect x="444" y="462" width="474" height="1" fill="#ebebed"/><rect x="444" y="431" width="474" height="1" fill="#ebebed"/><rect x="444" y="399" width="474" height="1" fill="#ebebed"/><rect x="444" y="368" width="474" height="1" fill="#ebebed"/><rect x="444" y="336" width="474" height="1" fill="#ebebed"/><rect x="444" y="304" width="474" height="1" fill="#ebebed"/><rect x="444" y="273" width="474" height="1" fill="#ebebed"/><rect x="444" y="241" width="474" height="1" fill="#ebebed"/><rect x="444" y="210" width="475" height="2" fill="#000"/><rect x="917" y="210" width="2" height="317" fill="#000"/><rect x="444" y="525" width="475" height="2" fill="#000"/></svg>
<svg style="left:0;top:0" width="1920" height="600" viewBox="0 0 1920 600"><circle cx="472.5" cy="340.4" r="5.3" fill="#ff0000"/><circle cx="468.5" cy="348.5" r="5.3" fill="#ff0000"/><circle cx="466.5" cy="374.5" r="5.3" fill="#ff0000"/><circle cx="498.5" cy="338.5" r="5.3" fill="#ff0000"/><circle cx="500.6" cy="351.2" r="5.3" fill="#ff0000"/><circle cx="505.6" cy="350.6" r="5.3" fill="#ff0000"/><circle cx="508.1" cy="358.5" r="5.3" fill="#ff0000"/><circle cx="513.1" cy="358.8" r="5.3" fill="#ff0000"/><circle cx="516.2" cy="359.4" r="5.3" fill="#ff0000"/><circle cx="533.5" cy="358.5" r="5.3" fill="#ff0000"/><circle cx="537.5" cy="384.4" r="5.3" fill="#ff0000"/><circle cx="540.6" cy="385.6" r="5.3" fill="#ff0000"/><circle cx="543.5" cy="386.2" r="5.3" fill="#ff0000"/><rect x="546.0" y="321.0" width="10" height="10" fill="#00ff00"/><rect x="541.0" y="340.0" width="10" height="10" fill="#00ff00"/><rect x="565.0" y="340.9" width="10" height="10" fill="#00ff00"/><rect x="592.0" y="341.9" width="10" height="10" fill="#00ff00"/><rect x="596.9" y="351.9" width="10" height="10" fill="#00ff00"/><rect x="568.1" y="360.0" width="10" height="10" fill="#00ff00"/><rect x="573.1" y="359.1" width="10" height="10" fill="#00ff00"/><rect x="594.0" y="365.6" width="10" height="10" fill="#00ff00"/><rect x="588.8" y="371.9" width="10" height="10" fill="#00ff00"/><rect x="599.0" y="368.8" width="10" height="10" fill="#00ff00"/><rect x="595.0" y="385.0" width="10" height="10" fill="#00ff00"/><rect x="615.0" y="378.8" width="10" height="10" fill="#00ff00"/><rect x="618.8" y="370.0" width="10" height="10" fill="#00ff00"/><rect x="623.1" y="366.9" width="10" height="10" fill="#00ff00"/><rect x="625.9" y="383.1" width="10" height="10" fill="#00ff00"/><rect x="641.9" y="390.9" width="10" height="10" fill="#00ff00"/><rect x="650.0" y="381.0" width="10" height="10" fill="#00ff00"/><rect x="647.1" y="368.1" width="10" height="10" fill="#00ff00"/><rect x="673.1" y="381.9" width="10" height="10" fill="#00ff00"/><path d="M617.0 353.1 H627.5 L622.2 363.1 Z" fill="#0000ff"/><path d="M612.9 358.4 H623.3 L618.1 368.4 Z" fill="#0000ff"/><path d="M643.8 356.0 H654.2 L649.0 366.0 Z" fill="#0000ff"/><path d="M640.8 364.1 H651.2 L646.0 374.1 Z" fill="#0000ff"/><path d="M635.8 370.2 H646.2 L641.0 380.2 Z" fill="#0000ff"/><path d="M662.9 377.2 H673.3 L668.1 387.2 Z" fill="#0000ff"/><path d="M667.9 378.4 H678.3 L673.1 388.4 Z" fill="#0000ff"/><path d="M691.0 361.2 H701.5 L696.2 371.2 Z" fill="#0000ff"/><path d="M686.9 367.1 H697.3 L692.1 377.1 Z" fill="#0000ff"/><path d="M717.9 362.0 H728.3 L723.1 372.0 Z" fill="#0000ff"/><path d="M736.9 367.1 H747.3 L742.1 377.1 Z" fill="#0000ff"/><path d="M764.8 366.2 H775.2 L770.0 376.2 Z" fill="#0000ff"/><path d="M761.0 378.1 H771.5 L766.2 388.1 Z" fill="#0000ff"/><path d="M709.8 383.4 H720.2 L715.0 393.4 Z" fill="#0000ff"/><path d="M714.8 385.2 H725.2 L720.0 395.2 Z" fill="#0000ff"/><path d="M741.9 385.2 H752.3 L747.1 395.2 Z" fill="#0000ff"/><path d="M791.7 367.1 H802.1 L796.9 377.1 Z" fill="#0000ff"/><path d="M788.8 369.0 H799.2 L794.0 379.0 Z" fill="#0000ff"/><path d="M816.0 370.1 H826.5 L821.2 380.1 Z" fill="#0000ff"/><path d="M871.0 359.0 H881.5 L876.2 369.0 Z" fill="#0000ff"/></svg>
<span style="position:absolute;left:416.20px;top:489.00px;font-size:12px;line-height:12px;white-space:pre;letter-spacing:-0.332px;color:#1a1a1a;">-0.08</span>
<span style="position:absolute;left:416.20px;top:458.00px;font-size:12px;line-height:12px;white-space:pre;letter-spacing:-0.332px;color:#1a1a1a;">-0.06</span>
<span style="position:absolute;left:416.20px;top:426.00px;font-size:12px;line-height:12px;white-space:pre;letter-spacing:-0.332px;color:#1a1a1a;">-0.04</span>
<span style="position:absolute;left:416.20px;top:394.00px;font-size:12px;line-height:12px;white-space:pre;letter-spacing:-0.332px;color:#1a1a1a;">-0.02</span>
<span style="position:absolute;left:416.20px;top:363.00px;font-size:12px;line-height:12px;white-space:pre;letter-spacing:-0.388px;color:#1a1a1a;">0</span>
<span style="position:absolute;left:416.20px;top:331.00px;font-size:12px;line-height:12px;white-space:pre;letter-spacing:-0.340px;color:#1a1a1a;">0.02</span>
<span style="position:absolute;left:416.20px;top:300.00px;font-size:12px;line-height:12px;white-space:pre;letter-spacing:-0.340px;color:#1a1a1a;">0.04</span>
<span style="position:absolute;left:416.20px;top:268.00px;font-size:12px;line-height:12px;white-space:pre;letter-spacing:-0.340px;color:#1a1a1a;">0.06</span>
<span style="position:absolute;left:416.20px;top:236.00px;font-size:12px;line-height:12px;white-space:pre;letter-spacing:-0.340px;color:#1a1a1a;">0.08</span>
<span style="position:absolute;left:482.20px;top:537.00px;font-size:12px;line-height:12px;white-space:pre;letter-spacing:-0.344px;color:#1a1a1a;">200</span>
<span style="position:absolute;left:529.60px;top:537.00px;font-size:12px;line-height:12px;white-space:pre;letter-spacing:-0.344px;color:#1a1a1a;">400</span>
<span style="position:absolute;left:577.00px;top:537.00px;font-size:12px;line-height:12px;white-space:pre;letter-spacing:-0.344px;color:#1a1a1a;">600</span>
<span style="position:absolute;left:624.40px;top:537.00px;font-size:12px;line-height:12px;white-space:pre;letter-spacing:-0.344px;color:#1a1a1a;">800</span>
<span style="position:absolute;left:668.50px;top:537.00px;font-size:12px;line-height:12px;white-space:pre;letter-spacing:-0.276px;color:#1a1a1a;">1000</span>
<span style="position:absolute;left:715.90px;top:537.00px;font-size:12px;line-height:12px;white-space:pre;letter-spacing:-0.276px;color:#1a1a1a;">1200</span>
<span style="position:absolute;left:763.30px;top:537.00px;font-size:12px;line-height:12px;white-space:pre;letter-spacing:-0.276px;color:#1a1a1a;">1400</span>
<span style="position:absolute;left:810.70px;top:537.00px;font-size:12px;line-height:12px;white-space:pre;letter-spacing:-0.276px;color:#1a1a1a;">1600</span>
<span style="position:absolute;left:858.10px;top:537.00px;font-size:12px;line-height:12px;white-space:pre;letter-spacing:-0.276px;color:#1a1a1a;">1800</span>
<span style="position:absolute;left:905.50px;top:537.00px;font-size:12px;line-height:12px;white-space:pre;letter-spacing:-0.276px;color:#1a1a1a;">2000</span>
<span style="position:absolute;left:671.55px;top:548.00px;font-size:11.5px;line-height:11.5px;white-space:pre;letter-spacing:0.443px;color:#1a1a1a;font-weight:700;">m/z</span>
<div style="position:absolute;left:295.2px;top:360.5px;width:220px;height:14px;transform:rotate(-90deg);text-align:center;font-size:12px;line-height:14px;font-weight:700;color:#1a1a1a;white-space:nowrap;letter-spacing:-0.05px">Mass Error (Da) (Observed-Theory)</div>
<svg style="left:0;top:0" width="1920" height="600" viewBox="0 0 1920 600" shape-rendering="crispEdges"><rect x="1009" y="210" width="1" height="316" fill="#ebebed"/><rect x="1056" y="210" width="1" height="316" fill="#ebebed"/><rect x="1104" y="210" width="1" height="316" fill="#ebebed"/><rect x="1152" y="210" width="1" height="316" fill="#ebebed"/><rect x="1200" y="210" width="1" height="316" fill="#ebebed"/><rect x="1248" y="210" width="1" height="316" fill="#ebebed"/><rect x="1296" y="210" width="1" height="316" fill="#ebebed"/><rect x="1343" y="210" width="1" height="316" fill="#ebebed"/><rect x="1391" y="210" width="1" height="316" fill="#ebebed"/><rect x="1439" y="210" width="1" height="316" fill="#ebebed"/><rect x="1009" y="494" width="478" height="1" fill="#ebebed"/><rect x="1009" y="462" width="478" height="1" fill="#ebebed"/><rect x="1009" y="431" width="478" height="1" fill="#ebebed"/><rect x="1009" y="399" width="478" height="1" fill="#ebebed"/><rect x="1009" y="368" width="478" height="1" fill="#ebebed"/><rect x="1009" y="336" width="478" height="1" fill="#ebebed"/><rect x="1009" y="304" width="478" height="1" fill="#ebebed"/><rect x="1009" y="273" width="478" height="1" fill="#ebebed"/><rect x="1009" y="241" width="478" height="1" fill="#ebebed"/><rect x="1009" y="209" width="478" height="1" fill="#ebebed"/><rect x="1486" y="210" width="2" height="317" fill="#000"/><rect x="1009" y="525" width="479" height="2" fill="#000"/></svg>
<svg style="left:0;top:0" width="1920" height="600" viewBox="0 0 1920 600"><circle cx="1031.2" cy="399.4" r="5.3" fill="#ff0000"/><circle cx="1034.4" cy="396.2" r="5.3" fill="#ff0000"/><circle cx="1037.5" cy="391.2" r="5.3" fill="#ff0000"/><circle cx="1063.8" cy="379.4" r="5.3" fill="#ff0000"/><circle cx="1070.0" cy="379.8" r="5.3" fill="#ff0000"/><circle cx="1073.8" cy="380.6" r="5.3" fill="#ff0000"/><circle cx="1077.5" cy="377.2" r="5.3" fill="#ff0000"/><circle cx="1082.5" cy="380.6" r="5.3" fill="#ff0000"/><circle cx="1099.4" cy="375.6" r="5.3" fill="#ff0000"/><circle cx="1103.1" cy="373.1" r="5.3" fill="#ff0000"/><circle cx="1109.4" cy="380.6" r="5.3" fill="#ff0000"/><rect x="1112.2" y="355.0" width="10" height="10" fill="#00ff00"/><rect x="1107.1" y="363.1" width="10" height="10" fill="#00ff00"/><rect x="1131.2" y="369.4" width="10" height="10" fill="#00ff00"/><rect x="1133.8" y="370.0" width="10" height="10" fill="#00ff00"/><rect x="1138.1" y="363.1" width="10" height="10" fill="#00ff00"/><rect x="1155.0" y="344.0" width="10" height="10" fill="#00ff00"/><rect x="1158.1" y="351.9" width="10" height="10" fill="#00ff00"/><rect x="1160.6" y="357.5" width="10" height="10" fill="#00ff00"/><rect x="1166.2" y="353.8" width="10" height="10" fill="#00ff00"/><rect x="1161.0" y="363.8" width="10" height="10" fill="#00ff00"/><rect x="1181.9" y="365.0" width="10" height="10" fill="#00ff00"/><rect x="1186.0" y="336.2" width="10" height="10" fill="#00ff00"/><rect x="1191.5" y="354.0" width="10" height="10" fill="#00ff00"/><rect x="1209.0" y="336.9" width="10" height="10" fill="#00ff00"/><rect x="1214.4" y="348.1" width="10" height="10" fill="#00ff00"/><rect x="1216.0" y="355.9" width="10" height="10" fill="#00ff00"/><rect x="1240.0" y="340.9" width="10" height="10" fill="#00ff00"/><path d="M1183.8 344.0 H1194.2 L1189.0 354.0 Z" fill="#0000ff"/><path d="M1178.8 357.1 H1189.2 L1184.0 367.1 Z" fill="#0000ff"/><path d="M1202.3 341.2 H1212.7 L1207.5 351.2 Z" fill="#0000ff"/><path d="M1210.8 340.2 H1221.2 L1216.0 350.2 Z" fill="#0000ff"/><path d="M1207.9 345.0 H1218.3 L1213.1 355.0 Z" fill="#0000ff"/><path d="M1234.8 345.6 H1245.2 L1240.0 355.6 Z" fill="#0000ff"/><path d="M1229.8 350.2 H1240.2 L1235.0 360.2 Z" fill="#0000ff"/><path d="M1253.8 345.4 H1264.2 L1259.0 355.4 Z" fill="#0000ff"/><path d="M1258.8 345.4 H1269.2 L1264.0 355.4 Z" fill="#0000ff"/><path d="M1284.8 334.4 H1295.2 L1290.0 344.4 Z" fill="#0000ff"/><path d="M1277.9 339.4 H1288.3 L1283.1 349.4 Z" fill="#0000ff"/><path d="M1280.4 341.9 H1290.8 L1285.6 351.9 Z" fill="#0000ff"/><path d="M1281.9 351.2 H1292.3 L1287.1 361.2 Z" fill="#0000ff"/><path d="M1303.8 334.6 H1314.2 L1309.0 344.6 Z" fill="#0000ff"/><path d="M1308.8 333.4 H1319.2 L1314.0 343.4 Z" fill="#0000ff"/><path d="M1327.9 329.4 H1338.3 L1333.1 339.4 Z" fill="#0000ff"/><path d="M1332.9 330.4 H1343.3 L1338.1 340.4 Z" fill="#0000ff"/><path d="M1356.9 312.1 H1367.3 L1362.1 322.1 Z" fill="#0000ff"/><path d="M1359.8 326.2 H1370.2 L1365.0 336.2 Z" fill="#0000ff"/><path d="M1383.8 330.2 H1394.2 L1389.0 340.2 Z" fill="#0000ff"/><path d="M1438.8 318.4 H1449.2 L1444.0 328.4 Z" fill="#0000ff"/></svg>
<span style="position:absolute;left:985.20px;top:489.00px;font-size:12px;line-height:12px;white-space:pre;letter-spacing:-0.465px;color:#1a1a1a;">0.05</span>
<span style="position:absolute;left:985.20px;top:458.00px;font-size:12px;line-height:12px;white-space:pre;letter-spacing:-0.562px;color:#1a1a1a;">0.1</span>
<span style="position:absolute;left:985.20px;top:426.00px;font-size:12px;line-height:12px;white-space:pre;letter-spacing:-0.465px;color:#1a1a1a;">0.15</span>
<span style="position:absolute;left:985.20px;top:394.00px;font-size:12px;line-height:12px;white-space:pre;letter-spacing:-0.562px;color:#1a1a1a;">0.2</span>
<span style="position:absolute;left:985.20px;top:363.00px;font-size:12px;line-height:12px;white-space:pre;letter-spacing:-0.465px;color:#1a1a1a;">0.25</span>
<span style="position:absolute;left:985.20px;top:331.00px;font-size:12px;line-height:12px;white-space:pre;letter-spacing:-0.562px;color:#1a1a1a;">0.3</span>
<span style="position:absolute;left:985.20px;top:300.00px;font-size:12px;line-height:12px;white-space:pre;letter-spacing:-0.465px;color:#1a1a1a;">0.35</span>
<span style="position:absolute;left:985.20px;top:268.00px;font-size:12px;line-height:12px;white-space:pre;letter-spacing:-0.562px;color:#1a1a1a;">0.4</span>
<span style="position:absolute;left:985.20px;top:236.00px;font-size:12px;line-height:12px;white-space:pre;letter-spacing:-0.465px;color:#1a1a1a;">0.45</span>
<span style="position:absolute;left:1046.30px;top:537.00px;font-size:12px;line-height:12px;white-space:pre;letter-spacing:-0.344px;color:#1a1a1a;">200</span>
<span style="position:absolute;left:1094.20px;top:537.00px;font-size:12px;line-height:12px;white-space:pre;letter-spacing:-0.344px;color:#1a1a1a;">400</span>
<span style="position:absolute;left:1142.10px;top:537.00px;font-size:12px;line-height:12px;white-space:pre;letter-spacing:-0.344px;color:#1a1a1a;">600</span>
<span style="position:absolute;left:1190.00px;top:537.00px;font-size:12px;line-height:12px;white-space:pre;letter-spacing:-0.344px;color:#1a1a1a;">800</span>
<span style="position:absolute;left:1234.60px;top:537.00px;font-size:12px;line-height:12px;white-space:pre;letter-spacing:-0.276px;color:#1a1a1a;">1000</span>
<span style="position:absolute;left:1282.50px;top:537.00px;font-size:12px;line-height:12px;white-space:pre;letter-spacing:-0.276px;color:#1a1a1a;">1200</span>
<span style="position:absolute;left:1330.40px;top:537.00px;font-size:12px;line-height:12px;white-space:pre;letter-spacing:-0.276px;color:#1a1a1a;">1400</span>
<span style="position:absolute;left:1378.30px;top:537.00px;font-size:12px;line-height:12px;white-space:pre;letter-spacing:-0.276px;color:#1a1a1a;">1600</span>
<span style="position:absolute;left:1426.20px;top:537.00px;font-size:12px;line-height:12px;white-space:pre;letter-spacing:-0.276px;color:#1a1a1a;">1800</span>
<span style="position:absolute;left:1474.10px;top:537.00px;font-size:12px;line-height:12px;white-space:pre;letter-spacing:-0.276px;color:#1a1a1a;">2000</span>
<span style="position:absolute;left:1238.75px;top:548.00px;font-size:11.5px;line-height:11.5px;white-space:pre;letter-spacing:0.443px;color:#1a1a1a;font-weight:700;">m/z</span>
<div style="position:absolute;left:874.2px;top:362px;width:200px;height:14px;transform:rotate(-90deg);text-align:center;font-size:12px;line-height:14px;font-weight:700;color:#1a1a1a;white-space:nowrap;letter-spacing:0px">Peak Width (Da)</div>
<div style="position:absolute;left:373px;top:587px;width:1132px;height:420px;background:#fff;border:1px solid #7d95b0;border-right-color:#8fa3ba;border-bottom-color:#96a7bb;box-shadow:1px 1px 0 #d3deea inset;"></div>
<span style="position:absolute;left:376.00px;top:591.00px;font-size:14px;line-height:14px;white-space:pre;letter-spacing:0.297px;color:#1a1a1a;">#62581</span>
<span style="position:absolute;left:442.70px;top:591.00px;font-size:14px;line-height:14px;white-space:pre;letter-spacing:-0.125px;color:#1a1a1a;">RT:1489440:36NL:2.49E+006</span>
<span style="position:absolute;left:651.50px;top:591.00px;font-size:14px;line-height:14px;white-space:pre;letter-spacing:0.162px;color:#1a1a1a;">Injection Time:0.0613</span>
<span style="position:absolute;left:388.70px;top:608.00px;font-size:14px;line-height:14px;white-space:pre;letter-spacing:0.050px;color:#1a1a1a;">ITMS + p H-ESI Full [150.00 - 2000.00]</span>
<svg style="left:0;top:0" width="1920" height="1080" viewBox="0 0 1920 1080"><g fill="#000"><rect x="438.7" y="687.4" width="1.35" height="261.6"/><rect x="438.7" y="947.3" width="1014.4" height="1.45"/><rect x="429.8" y="947.4" width="9.2" height="1.15"/><rect x="435.6" y="934.4" width="3.4" height="1.1"/><rect x="435.6" y="921.4" width="3.4" height="1.1"/><rect x="435.6" y="908.4" width="3.4" height="1.1"/><rect x="429.8" y="895.4" width="9.2" height="1.15"/><rect x="435.6" y="882.4" width="3.4" height="1.1"/><rect x="435.6" y="869.4" width="3.4" height="1.1"/><rect x="435.6" y="856.4" width="3.4" height="1.1"/><rect x="429.8" y="843.4" width="9.2" height="1.15"/><rect x="435.6" y="830.4" width="3.4" height="1.1"/><rect x="435.6" y="817.4" width="3.4" height="1.1"/><rect x="435.6" y="804.4" width="3.4" height="1.1"/><rect x="429.8" y="791.4" width="9.2" height="1.15"/><rect x="435.6" y="778.4" width="3.4" height="1.1"/><rect x="435.6" y="765.4" width="3.4" height="1.1"/><rect x="435.6" y="752.4" width="3.4" height="1.1"/><rect x="429.8" y="739.4" width="9.2" height="1.15"/><rect x="435.6" y="726.4" width="3.4" height="1.1"/><rect x="435.6" y="713.4" width="3.4" height="1.1"/><rect x="435.6" y="700.4" width="3.4" height="1.1"/><rect x="429.8" y="687.4" width="9.2" height="1.15"/><rect x="438.37" y="948" width="1.3" height="3.5"/><rect x="465.75" y="948" width="1.3" height="10.5"/><rect x="493.13" y="948" width="1.3" height="3.5"/><rect x="520.51" y="948" width="1.3" height="6.5"/><rect x="547.89" y="948" width="1.3" height="3.5"/><rect x="575.27" y="948" width="1.3" height="10.5"/><rect x="602.65" y="948" width="1.3" height="3.5"/><rect x="630.03" y="948" width="1.3" height="6.5"/><rect x="657.41" y="948" width="1.3" height="3.5"/><rect x="684.79" y="948" width="1.3" height="10.5"/><rect x="712.17" y="948" width="1.3" height="3.5"/><rect x="739.55" y="948" width="1.3" height="6.5"/><rect x="766.93" y="948" width="1.3" height="3.5"/><rect x="794.31" y="948" width="1.3" height="10.5"/><rect x="821.69" y="948" width="1.3" height="3.5"/><rect x="849.07" y="948" width="1.3" height="6.5"/><rect x="876.45" y="948" width="1.3" height="3.5"/><rect x="903.83" y="948" width="1.3" height="10.5"/><rect x="931.21" y="948" width="1.3" height="3.5"/><rect x="958.59" y="948" width="1.3" height="6.5"/><rect x="985.97" y="948" width="1.3" height="3.5"/><rect x="1013.35" y="948" width="1.3" height="10.5"/><rect x="1040.73" y="948" width="1.3" height="3.5"/><rect x="1068.11" y="948" width="1.3" height="6.5"/><rect x="1095.49" y="948" width="1.3" height="3.5"/><rect x="1122.87" y="948" width="1.3" height="10.5"/><rect x="1150.25" y="948" width="1.3" height="3.5"/><rect x="1177.63" y="948" width="1.3" height="6.5"/><rect x="1205.01" y="948" width="1.3" height="3.5"/><rect x="1232.39" y="948" width="1.3" height="10.5"/><rect x="1259.77" y="948" width="1.3" height="3.5"/><rect x="1287.15" y="948" width="1.3" height="6.5"/><rect x="1314.53" y="948" width="1.3" height="3.5"/><rect x="1341.91" y="948" width="1.3" height="10.5"/><rect x="1369.29" y="948" width="1.3" height="3.5"/><rect x="1396.67" y="948" width="1.3" height="6.5"/><rect x="1424.05" y="948" width="1.3" height="3.5"/><rect x="1451.43" y="948" width="1.3" height="10.5"/></g><path d="M440 948 L440.0 944.5 L440.8 940.7 L441.6 944.6 L442.4 941.9 L443.2 944.1 L444.0 944.7 L444.8 943.8 L445.6 943.8 L446.4 942.7 L447.2 939.5 L448.0 944.9 L448.8 943.7 L449.6 944.6 L450.4 943.6 L451.2 941.7 L452.0 942.7 L452.8 944.0 L453.6 942.6 L454.4 943.0 L455.2 944.6 L456.0 945.2 L456.8 941.6 L457.6 945.0 L458.4 943.0 L459.2 941.2 L460.0 943.0 L460.8 941.2 L461.6 944.3 L462.4 943.6 L463.2 943.6 L464.0 942.6 L464.8 943.8 L465.6 937.5 L466.4 944.7 L467.2 940.1 L468.0 945.1 L468.8 945.0 L469.6 944.8 L470.4 944.6 L471.2 944.7 L472.0 945.3 L472.8 939.9 L473.6 939.8 L474.4 943.6 L475.2 944.8 L476.0 942.5 L476.8 943.8 L477.6 944.9 L478.4 945.0 L479.2 942.2 L480.0 942.5 L480.8 945.3 L481.6 941.3 L482.4 944.1 L483.2 945.0 L484.0 944.6 L484.8 941.9 L485.6 941.9 L486.4 941.2 L487.2 943.0 L488.0 943.3 L488.8 943.3 L489.6 938.9 L490.4 943.8 L491.2 944.2 L492.0 943.7 L492.8 941.6 L493.6 941.7 L494.4 944.3 L495.2 945.3 L496.0 944.9 L496.8 935.7 L497.6 943.9 L498.4 942.2 L499.2 940.0 L500.0 944.7 L500.8 944.3 L501.6 944.2 L502.4 945.0 L503.2 943.0 L504.0 940.2 L504.8 944.9 L505.6 945.3 L506.4 943.5 L507.2 944.8 L508.0 945.3 L508.8 943.1 L509.6 939.1 L510.4 938.8 L511.2 945.0 L512.0 945.2 L512.8 943.7 L513.6 941.3 L514.4 942.5 L515.2 945.1 L516.0 944.4 L516.8 944.6 L517.6 941.1 L518.4 944.9 L519.2 943.2 L520.0 943.3 L520.8 943.8 L521.6 944.8 L522.4 944.3 L523.2 945.0 L524.0 944.1 L524.8 944.1 L525.6 943.4 L526.4 938.5 L527.2 944.9 L528.0 942.9 L528.8 944.4 L529.6 945.0 L530.4 943.6 L531.2 943.8 L532.0 944.5 L532.8 943.4 L533.6 944.2 L534.4 943.3 L535.2 944.0 L536.0 939.9 L536.8 944.9 L537.6 940.8 L538.4 945.4 L539.2 945.0 L540.0 942.2 L540.8 941.2 L541.6 944.0 L542.4 945.5 L543.2 943.4 L544.0 941.5 L544.8 943.9 L545.6 943.2 L546.4 943.6 L547.2 942.5 L548.0 944.6 L548.8 943.9 L549.6 940.5 L550.4 939.8 L551.2 943.3 L552.0 941.8 L552.8 940.2 L553.6 944.4 L554.4 940.2 L555.2 944.8 L556.0 944.4 L556.8 944.4 L557.6 939.4 L558.4 940.7 L559.2 945.3 L560.0 943.3 L560.8 945.4 L561.6 945.5 L562.4 945.1 L563.2 943.3 L564.0 945.3 L564.8 938.8 L565.6 942.7 L566.4 940.2 L567.2 944.4 L568.0 943.8 L568.8 943.7 L569.6 945.5 L570.4 944.2 L571.2 941.8 L572.0 944.6 L572.8 940.3 L573.6 943.0 L574.4 937.2 L575.2 943.1 L576.0 943.9 L576.8 942.9 L577.6 943.5 L578.4 943.4 L579.2 945.2 L580.0 945.0 L580.8 944.2 L581.6 941.7 L582.4 942.9 L583.2 940.0 L584.0 944.1 L584.8 945.2 L585.6 942.0 L586.4 942.8 L587.2 944.4 L588.0 943.5 L588.8 943.4 L589.6 945.4 L590.4 944.0 L591.2 942.5 L592.0 942.0 L592.8 943.9 L593.6 941.6 L594.4 943.3 L595.2 945.3 L596.0 943.9 L596.8 944.2 L597.6 943.5 L598.4 942.6 L599.2 945.2 L600.0 942.6 L600.8 943.6 L601.6 944.1 L602.4 943.9 L603.2 942.7 L604.0 944.4 L604.8 945.4 L605.6 942.5 L606.4 943.6 L607.2 942.5 L608.0 942.5 L608.8 939.5 L609.6 945.3 L610.4 945.2 L611.2 943.0 L612.0 942.9 L612.8 942.9 L613.6 945.3 L614.4 944.3 L615.2 942.9 L616.0 943.8 L616.8 944.1 L617.6 942.1 L618.4 942.9 L619.2 943.2 L620.0 939.4 L620.8 945.7 L621.6 942.9 L622.4 942.2 L623.2 942.4 L624.0 945.6 L624.8 944.2 L625.6 943.4 L626.4 945.7 L627.2 945.4 L628.0 942.5 L628.8 944.7 L629.6 944.3 L630.4 943.7 L631.2 945.6 L632.0 944.5 L632.8 942.5 L633.6 943.2 L634.4 945.2 L635.2 943.7 L636.0 937.1 L636.8 943.2 L637.6 940.2 L638.4 944.4 L639.2 940.3 L640.0 944.0 L640.8 943.6 L641.6 944.6 L642.4 943.3 L643.2 945.2 L644.0 940.0 L644.8 943.3 L645.6 945.7 L646.4 944.7 L647.2 940.6 L648.0 945.2 L648.8 944.8 L649.6 944.3 L650.4 944.7 L651.2 942.7 L652.0 945.8 L652.8 945.7 L653.6 945.1 L654.4 944.6 L655.2 940.5 L656.0 944.4 L656.8 945.8 L657.6 942.7 L658.4 943.0 L659.2 943.1 L660.0 941.4 L660.8 942.2 L661.6 944.7 L662.4 940.8 L663.2 944.3 L664.0 944.8 L664.8 944.3 L665.6 945.7 L666.4 942.5 L667.2 944.8 L668.0 945.0 L668.8 943.7 L669.6 944.4 L670.4 943.4 L671.2 945.8 L672.0 944.1 L672.8 944.8 L673.6 945.7 L674.4 943.0 L675.2 943.9 L676.0 944.7 L676.8 945.5 L677.6 945.2 L678.4 944.0 L679.2 944.0 L680.0 945.5 L680.8 944.2 L681.6 940.6 L682.4 944.1 L683.2 945.4 L684.0 945.8 L684.8 940.8 L685.6 945.4 L686.4 943.9 L687.2 942.0 L688.0 944.9 L688.8 945.1 L689.6 942.6 L690.4 944.7 L691.2 939.7 L692.0 945.2 L692.8 943.1 L693.6 944.4 L694.4 945.9 L695.2 942.8 L696.0 943.5 L696.8 944.8 L697.6 943.6 L698.4 943.0 L699.2 942.9 L700.0 945.2 L700.8 945.8 L701.6 944.3 L702.4 945.8 L703.2 945.5 L704.0 944.5 L704.8 945.2 L705.6 945.9 L706.4 945.4 L707.2 945.4 L708.0 944.7 L708.8 944.5 L709.6 945.9 L710.4 945.3 L711.2 944.6 L712.0 944.5 L712.8 940.8 L713.6 945.6 L714.4 943.8 L715.2 944.7 L716.0 944.3 L716.8 943.4 L717.6 945.5 L718.4 943.4 L719.2 943.7 L720.0 945.4 L720.8 944.8 L721.6 942.9 L722.4 945.4 L723.2 943.6 L724.0 944.9 L724.8 945.0 L725.6 945.7 L726.4 943.6 L727.2 942.9 L728.0 943.7 L728.8 945.3 L729.6 945.3 L730.4 941.9 L731.2 943.7 L732.0 938.7 L732.8 945.9 L733.6 942.5 L734.4 945.3 L735.2 940.8 L736.0 945.7 L736.8 940.9 L737.6 943.5 L738.4 943.0 L739.2 940.8 L740.0 945.2 L740.8 946.1 L741.6 943.8 L742.4 944.5 L743.2 942.6 L744.0 945.7 L744.8 943.2 L745.6 943.7 L746.4 943.3 L747.2 945.1 L748.0 944.5 L748.8 943.4 L749.6 940.9 L750.4 946.0 L751.2 945.2 L752.0 945.5 L752.8 943.9 L753.6 943.8 L754.4 944.0 L755.2 945.6 L756.0 945.2 L756.8 944.3 L757.6 945.3 L758.4 946.1 L759.2 944.6 L760.0 944.5 L760.8 945.3 L761.6 944.6 L762.4 946.1 L763.2 945.2 L764.0 946.1 L764.8 941.9 L765.6 942.3 L766.4 944.1 L767.2 941.0 L768.0 943.3 L768.8 943.2 L769.6 945.3 L770.4 941.3 L771.2 945.1 L772.0 945.2 L772.8 945.7 L773.6 944.7 L774.4 946.1 L775.2 945.9 L776.0 945.5 L776.8 944.5 L777.6 945.5 L778.4 945.9 L779.2 943.4 L780.0 945.3 L780.8 945.5 L781.6 944.2 L782.4 944.5 L783.2 945.7 L784.0 942.7 L784.8 944.2 L785.6 945.1 L786.4 939.4 L787.2 942.9 L788.0 944.5 L788.8 942.4 L789.6 945.9 L790.4 945.5 L791.2 945.7 L792.0 945.1 L792.8 946.2 L793.6 945.3 L794.4 945.8 L795.2 944.9 L796.0 945.9 L796.8 940.2 L797.6 945.9 L798.4 943.9 L799.2 944.7 L800.0 945.9 L800.8 944.9 L801.6 945.6 L802.4 945.1 L803.2 944.3 L804.0 946.0 L804.8 943.0 L805.6 942.1 L806.4 942.6 L807.2 945.3 L808.0 943.6 L808.8 945.4 L809.6 944.5 L810.4 945.2 L811.2 945.8 L812.0 946.1 L812.8 945.9 L813.6 943.0 L814.4 945.3 L815.2 944.3 L816.0 945.5 L816.8 945.9 L817.6 943.6 L818.4 945.6 L819.2 943.5 L820.0 944.0 L820.8 945.3 L821.6 946.0 L822.4 945.9 L823.2 942.8 L824.0 941.5 L824.8 946.0 L825.6 943.3 L826.4 942.0 L827.2 944.1 L828.0 942.9 L828.8 944.9 L829.6 944.5 L830.4 946.1 L831.2 942.7 L832.0 943.9 L832.8 942.5 L833.6 944.7 L834.4 943.4 L835.2 945.1 L836.0 945.0 L836.8 942.9 L837.6 944.4 L838.4 945.0 L839.2 944.9 L840.0 943.8 L840.8 946.2 L841.6 945.2 L842.4 942.5 L843.2 946.3 L844.0 943.6 L844.8 944.6 L845.6 944.9 L846.4 944.8 L847.2 945.0 L848.0 945.4 L848.8 944.5 L849.6 945.8 L850.4 945.6 L851.2 944.2 L852.0 945.1 L852.8 945.4 L853.6 946.2 L854.4 945.9 L855.2 945.7 L856.0 946.0 L856.8 941.7 L857.6 944.8 L858.4 945.7 L859.2 943.6 L860.0 945.2 L860.8 944.2 L861.6 945.7 L862.4 940.9 L863.2 945.2 L864.0 945.6 L864.8 945.4 L865.6 944.3 L866.4 943.8 L867.2 946.2 L868.0 945.8 L868.8 946.3 L869.6 946.2 L870.4 943.5 L871.2 945.7 L872.0 943.5 L872.8 945.6 L873.6 945.2 L874.4 943.1 L875.2 944.6 L876.0 945.8 L876.8 946.1 L877.6 943.8 L878.4 946.2 L879.2 946.2 L880.0 946.2 L880.8 942.1 L881.6 945.2 L882.4 945.3 L883.2 944.5 L884.0 944.4 L884.8 943.1 L885.6 945.8 L886.4 943.8 L887.2 945.3 L888.0 945.8 L888.8 944.0 L889.6 946.2 L890.4 946.1 L891.2 945.0 L892.0 945.6 L892.8 944.6 L893.6 944.4 L894.4 945.0 L895.2 945.5 L896.0 945.9 L896.8 946.0 L897.6 945.7 L898.4 946.2 L899.2 943.1 L900.0 945.7 L900.8 945.3 L901.6 944.3 L902.4 944.1 L903.2 944.8 L904.0 946.1 L904.8 946.3 L905.6 946.1 L906.4 944.8 L907.2 943.1 L908.0 944.4 L908.8 943.7 L909.6 945.3 L910.4 945.3 L911.2 946.2 L912.0 944.6 L912.8 945.5 L913.6 946.3 L914.4 946.5 L915.2 946.2 L916.0 945.4 L916.8 945.8 L917.6 945.3 L918.4 945.9 L919.2 943.9 L920.0 946.0 L920.8 946.0 L921.6 945.9 L922.4 944.2 L923.2 943.7 L924.0 944.3 L924.8 945.4 L925.6 946.3 L926.4 944.9 L927.2 946.5 L928.0 944.5 L928.8 946.0 L929.6 945.6 L930.4 945.3 L931.2 945.1 L932.0 944.5 L932.8 943.8 L933.6 945.4 L934.4 943.1 L935.2 945.7 L936.0 945.7 L936.8 944.1 L937.6 945.8 L938.4 945.5 L939.2 945.7 L940.0 945.3 L940.8 946.4 L941.6 945.8 L942.4 943.0 L943.2 943.4 L944.0 945.5 L944.8 946.1 L945.6 944.2 L946.4 945.0 L947.2 945.9 L948.0 944.7 L948.8 945.1 L949.6 944.8 L950.4 945.1 L951.2 945.6 L952.0 945.5 L952.8 946.0 L953.6 946.2 L954.4 944.1 L955.2 945.4 L956.0 945.2 L956.8 945.2 L957.6 945.6 L958.4 945.7 L959.2 945.7 L960.0 945.4 L960.8 945.4 L961.6 945.6 L962.4 944.4 L963.2 939.9 L964.0 946.3 L964.8 945.8 L965.6 942.9 L966.4 944.8 L967.2 945.7 L968.0 944.7 L968.8 944.3 L969.6 945.6 L970.4 946.2 L971.2 946.5 L972.0 945.8 L972.8 945.4 L973.6 944.2 L974.4 944.4 L975.2 945.4 L976.0 946.2 L976.8 944.0 L977.6 946.1 L978.4 943.8 L979.2 944.7 L980.0 944.6 L980.8 944.6 L981.6 946.2 L982.4 945.3 L983.2 944.8 L984.0 945.3 L984.8 946.4 L985.6 945.9 L986.4 945.4 L987.2 945.8 L988.0 945.8 L988.8 944.1 L989.6 946.6 L990.4 946.1 L991.2 945.0 L992.0 945.8 L992.8 945.4 L993.6 943.9 L994.4 945.6 L995.2 944.8 L996.0 943.6 L996.8 944.5 L997.6 946.0 L998.4 946.0 L999.2 945.8 L1000.0 944.8 L1000.8 943.9 L1001.6 945.0 L1002.4 945.3 L1003.2 944.6 L1004.0 945.0 L1004.8 946.0 L1005.6 944.9 L1006.4 945.2 L1007.2 945.4 L1008.0 945.5 L1008.8 945.3 L1009.6 945.6 L1010.4 945.3 L1011.2 946.6 L1012.0 946.5 L1012.8 944.6 L1013.6 945.8 L1014.4 943.4 L1015.2 944.8 L1016.0 946.4 L1016.8 946.4 L1017.6 945.5 L1018.4 946.1 L1019.2 940.8 L1020.0 946.4 L1020.8 945.1 L1021.6 944.2 L1022.4 944.2 L1023.2 946.3 L1024.0 945.0 L1024.8 945.8 L1025.6 946.0 L1026.4 945.4 L1027.2 942.7 L1028.0 946.5 L1028.8 946.1 L1029.6 945.6 L1030.4 942.3 L1031.2 944.8 L1032.0 946.3 L1032.8 945.3 L1033.6 945.0 L1034.4 945.8 L1035.2 945.0 L1036.0 945.6 L1036.8 946.1 L1037.6 944.9 L1038.4 945.9 L1039.2 945.3 L1040.0 946.6 L1040.8 946.4 L1041.6 946.0 L1042.4 945.6 L1043.2 945.7 L1044.0 946.3 L1044.8 946.1 L1045.6 945.4 L1046.4 943.9 L1047.2 946.1 L1048.0 943.9 L1048.8 943.5 L1049.6 943.9 L1050.4 944.9 L1051.2 946.2 L1052.0 946.4 L1052.8 944.1 L1053.6 946.6 L1054.4 946.2 L1055.2 946.6 L1056.0 944.5 L1056.8 946.5 L1057.6 946.6 L1058.4 946.3 L1059.2 945.4 L1060.0 945.0 L1060.8 946.4 L1061.6 945.3 L1062.4 943.8 L1063.2 946.3 L1064.0 946.5 L1064.8 946.3 L1065.6 945.4 L1066.4 944.4 L1067.2 945.6 L1068.0 945.4 L1068.8 945.3 L1069.6 944.8 L1070.4 945.8 L1071.2 945.7 L1072.0 944.5 L1072.8 946.0 L1073.6 943.3 L1074.4 945.4 L1075.2 945.9 L1076.0 945.2 L1076.8 945.8 L1077.6 946.1 L1078.4 945.3 L1079.2 945.3 L1080.0 945.0 L1080.8 945.8 L1081.6 944.7 L1082.4 942.7 L1083.2 945.8 L1084.0 944.3 L1084.8 945.4 L1085.6 944.8 L1086.4 946.5 L1087.2 946.3 L1088.0 946.1 L1088.8 944.7 L1089.6 945.2 L1090.4 945.6 L1091.2 946.8 L1092.0 944.6 L1092.8 944.8 L1093.6 945.6 L1094.4 944.3 L1095.2 945.5 L1096.0 945.1 L1096.8 946.6 L1097.6 946.0 L1098.4 945.0 L1099.2 945.5 L1100.0 942.7 L1100.8 946.4 L1101.6 946.4 L1102.4 945.9 L1103.2 945.4 L1104.0 946.5 L1104.8 946.8 L1105.6 945.2 L1106.4 946.7 L1107.2 944.0 L1108.0 945.4 L1108.8 944.6 L1109.6 946.6 L1110.4 946.5 L1111.2 946.6 L1112.0 943.8 L1112.8 946.0 L1113.6 945.8 L1114.4 946.1 L1115.2 946.8 L1116.0 945.2 L1116.8 946.2 L1117.6 945.7 L1118.4 943.0 L1119.2 944.6 L1120.0 945.2 L1120.8 944.6 L1121.6 944.7 L1122.4 946.2 L1123.2 946.4 L1124.0 946.8 L1124.8 945.1 L1125.6 946.2 L1126.4 946.9 L1127.2 946.3 L1128.0 945.9 L1128.8 945.9 L1129.6 943.2 L1130.4 945.4 L1131.2 944.1 L1132.0 946.2 L1132.8 945.1 L1133.6 944.9 L1134.4 944.5 L1135.2 945.2 L1136.0 945.8 L1136.8 946.6 L1137.6 946.4 L1138.4 946.4 L1139.2 946.5 L1140.0 945.4 L1140.8 946.8 L1141.6 945.6 L1142.4 946.3 L1143.2 946.0 L1144.0 945.8 L1144.8 944.5 L1145.6 944.5 L1146.4 946.0 L1147.2 945.9 L1148.0 946.8 L1148.8 944.4 L1149.6 944.1 L1150.4 946.1 L1151.2 946.3 L1152.0 946.8 L1152.8 943.3 L1153.6 943.9 L1154.4 946.4 L1155.2 946.4 L1156.0 945.7 L1156.8 946.3 L1157.6 946.6 L1158.4 946.7 L1159.2 946.2 L1160.0 945.8 L1160.8 946.0 L1161.6 945.5 L1162.4 945.7 L1163.2 946.8 L1164.0 946.5 L1164.8 946.9 L1165.6 946.5 L1166.4 945.6 L1167.2 942.1 L1168.0 944.5 L1168.8 946.6 L1169.6 946.4 L1170.4 946.0 L1171.2 946.9 L1172.0 946.9 L1172.8 946.4 L1173.6 946.9 L1174.4 946.3 L1175.2 946.2 L1176.0 947.0 L1176.8 946.5 L1177.6 945.6 L1178.4 946.9 L1179.2 943.9 L1180.0 946.6 L1180.8 946.3 L1181.6 945.4 L1182.4 944.6 L1183.2 946.2 L1184.0 945.2 L1184.8 946.7 L1185.6 946.9 L1186.4 946.6 L1187.2 946.0 L1188.0 947.0 L1188.8 946.0 L1189.6 945.8 L1190.4 945.3 L1191.2 946.1 L1192.0 945.9 L1192.8 946.6 L1193.6 945.9 L1194.4 946.8 L1195.2 946.5 L1196.0 946.3 L1196.8 944.9 L1197.6 946.8 L1198.4 946.8 L1199.2 946.7 L1200.0 946.2 L1200.8 946.7 L1201.6 946.1 L1202.4 946.0 L1203.2 946.8 L1204.0 947.0 L1204.8 946.6 L1205.6 944.4 L1206.4 943.1 L1207.2 945.5 L1208.0 946.6 L1208.8 946.2 L1209.6 946.4 L1210.4 946.4 L1211.2 946.1 L1212.0 946.7 L1212.8 945.9 L1213.6 946.0 L1214.4 946.9 L1215.2 945.8 L1216.0 946.6 L1216.8 946.6 L1217.6 946.8 L1218.4 946.2 L1219.2 946.2 L1220.0 945.7 L1220.8 946.5 L1221.6 945.4 L1222.4 946.1 L1223.2 946.2 L1224.0 946.8 L1224.8 945.7 L1225.6 946.0 L1226.4 947.0 L1227.2 945.8 L1228.0 946.6 L1228.8 946.5 L1229.6 945.2 L1230.4 946.2 L1231.2 946.2 L1232.0 945.4 L1232.8 946.4 L1233.6 945.3 L1234.4 946.6 L1235.2 946.1 L1236.0 945.8 L1236.8 946.5 L1237.6 945.9 L1238.4 947.0 L1239.2 945.8 L1240.0 946.6 L1240.8 944.4 L1241.6 946.0 L1242.4 946.4 L1243.2 945.4 L1244.0 946.1 L1244.8 946.2 L1245.6 946.3 L1246.4 946.8 L1247.2 946.1 L1248.0 946.3 L1248.8 945.4 L1249.6 946.4 L1250.4 946.8 L1251.2 945.8 L1252.0 946.4 L1252.8 946.2 L1253.6 945.3 L1254.4 946.8 L1255.2 945.1 L1256.0 946.0 L1256.8 946.6 L1257.6 943.5 L1258.4 946.2 L1259.2 946.7 L1260.0 946.1 L1260.8 945.6 L1261.6 945.1 L1262.4 946.3 L1263.2 946.5 L1264.0 945.2 L1264.8 946.1 L1265.6 945.7 L1266.4 946.6 L1267.2 945.2 L1268.0 946.7 L1268.8 945.2 L1269.6 946.8 L1270.4 945.9 L1271.2 946.1 L1272.0 946.3 L1272.8 946.4 L1273.6 945.9 L1274.4 947.0 L1275.2 946.2 L1276.0 946.1 L1276.8 946.9 L1277.6 946.9 L1278.4 945.2 L1279.2 945.7 L1280.0 945.8 L1280.8 946.3 L1281.6 946.4 L1282.4 946.9 L1283.2 945.8 L1284.0 947.1 L1284.8 946.2 L1285.6 945.7 L1286.4 946.5 L1287.2 946.1 L1288.0 944.7 L1288.8 946.8 L1289.6 946.9 L1290.4 946.2 L1291.2 945.4 L1292.0 945.9 L1292.8 946.2 L1293.6 946.8 L1294.4 945.0 L1295.2 945.9 L1296.0 947.1 L1296.8 946.8 L1297.6 946.3 L1298.4 945.2 L1299.2 945.1 L1300.0 945.6 L1300.8 947.1 L1301.6 946.2 L1302.4 946.4 L1303.2 945.3 L1304.0 947.1 L1304.8 946.5 L1305.6 946.4 L1306.4 947.0 L1307.2 946.2 L1308.0 946.9 L1308.8 945.9 L1309.6 945.9 L1310.4 946.9 L1311.2 944.4 L1312.0 946.8 L1312.8 946.7 L1313.6 946.9 L1314.4 945.3 L1315.2 946.3 L1316.0 945.7 L1316.8 947.0 L1317.6 946.2 L1318.4 946.1 L1319.2 946.8 L1320.0 946.1 L1320.8 946.1 L1321.6 946.4 L1322.4 946.7 L1323.2 946.7 L1324.0 945.3 L1324.8 946.4 L1325.6 947.0 L1326.4 946.5 L1327.2 946.1 L1328.0 946.7 L1328.8 946.9 L1329.6 946.9 L1330.4 946.8 L1331.2 946.4 L1332.0 947.2 L1332.8 947.1 L1333.6 946.7 L1334.4 945.5 L1335.2 946.0 L1336.0 946.9 L1336.8 944.8 L1337.6 946.7 L1338.4 946.4 L1339.2 947.0 L1340.0 946.5 L1340.8 946.8 L1341.6 946.8 L1342.4 947.0 L1343.2 944.7 L1344.0 946.9 L1344.8 945.1 L1345.6 946.8 L1346.4 946.7 L1347.2 947.0 L1348.0 946.5 L1348.8 947.2 L1349.6 947.2 L1350.4 947.1 L1351.2 946.9 L1352.0 946.5 L1352.8 947.0 L1353.6 946.7 L1354.4 945.3 L1355.2 946.9 L1356.0 946.3 L1356.8 947.1 L1357.6 946.8 L1358.4 946.0 L1359.2 946.6 L1360.0 946.5 L1360.8 946.5 L1361.6 946.2 L1362.4 946.7 L1363.2 947.2 L1364.0 946.9 L1364.8 947.1 L1365.6 946.1 L1366.4 946.6 L1367.2 947.0 L1368.0 946.7 L1368.8 946.9 L1369.6 946.9 L1370.4 945.9 L1371.2 946.3 L1372.0 947.1 L1372.8 946.7 L1373.6 945.5 L1374.4 946.4 L1375.2 945.8 L1376.0 946.6 L1376.8 946.1 L1377.6 947.0 L1378.4 945.6 L1379.2 946.8 L1380.0 946.8 L1380.8 946.8 L1381.6 945.9 L1382.4 946.8 L1383.2 946.3 L1384.0 947.1 L1384.8 947.2 L1385.6 946.0 L1386.4 946.5 L1387.2 946.4 L1388.0 946.6 L1388.8 947.1 L1389.6 947.2 L1390.4 945.8 L1391.2 945.8 L1392.0 945.1 L1392.8 946.8 L1393.6 947.1 L1394.4 946.7 L1395.2 946.8 L1396.0 947.0 L1396.8 947.2 L1397.6 946.5 L1398.4 946.9 L1399.2 946.5 L1400.0 946.9 L1400.8 946.7 L1401.6 946.1 L1402.4 946.1 L1403.2 946.3 L1404.0 946.9 L1404.8 946.9 L1405.6 946.2 L1406.4 946.8 L1407.2 946.5 L1408.0 946.4 L1408.8 947.0 L1409.6 945.6 L1410.4 947.2 L1411.2 946.6 L1412.0 946.9 L1412.8 946.6 L1413.6 946.9 L1414.4 946.4 L1415.2 945.6 L1416.0 946.2 L1416.8 946.9 L1417.6 946.6 L1418.4 946.9 L1419.2 945.9 L1420.0 946.3 L1420.8 946.1 L1421.6 946.2 L1422.4 946.7 L1423.2 946.8 L1424.0 946.1 L1424.8 947.1 L1425.6 947.1 L1426.4 947.1 L1427.2 946.9 L1428.0 947.1 L1428.8 946.5 L1429.6 946.8 L1430.4 946.9 L1431.2 947.0 L1432.0 946.9 L1432.8 947.1 L1433.6 946.4 L1434.4 946.7 L1435.2 946.7 L1436.0 947.1 L1436.8 946.2 L1437.6 947.2 L1438.4 946.5 L1439.2 946.9 L1440.0 946.9 L1440.8 945.9 L1441.6 947.2 L1442.4 946.9 L1443.2 946.3 L1444.0 945.5 L1444.8 946.3 L1445.6 946.2 L1446.4 947.2 L1447.2 947.1 L1448.0 946.9 L1448.8 946.1 L1449.6 946.1 L1450.4 946.1 L1451.2 946.9 L1452.0 946.9 L1452 948 Z" fill="#000" stroke="#000" stroke-width="0.8" stroke-linejoin="miter"/><path d="M463.07 947 L463.32 852.6 L463.85 847.6 L464.15 847.6 L464.68 852.6 L465.03 947 Z" fill="#000"/><path d="M474.97 947 L475.22 920.8 L475.55 915.8 L475.85 915.8 L476.18 920.8 L476.53 947 Z" fill="#000"/><path d="M486.77 947 L487.02 922.6 L487.35 917.6 L487.65 917.6 L487.98 922.6 L488.33 947 Z" fill="#000"/><path d="M500.07 947 L500.32 804.8 L500.85 799.8 L501.15 799.8 L501.68 804.8 L502.03 947 Z" fill="#000"/><path d="M504.80 947 L505.05 925.7 L505.35 920.7 L505.65 920.7 L505.95 925.7 L506.30 947 Z" fill="#000"/><path d="M514.10 947 L514.35 937.4 L514.65 932.4 L514.95 932.4 L515.25 937.4 L515.60 947 Z" fill="#000"/><path d="M532.33 947 L532.58 791.8 L533.05 786.8 L533.35 786.8 L533.83 791.8 L534.18 947 Z" fill="#000"/><path d="M541.42 947 L541.67 788.4 L542.15 783.4 L542.45 783.4 L542.92 788.4 L543.27 947 Z" fill="#000"/><path d="M554.60 947 L554.85 940.0 L555.15 935.0 L555.45 935.0 L555.75 940.0 L556.10 947 Z" fill="#000"/><path d="M571.47 947 L571.72 865.1 L572.15 860.1 L572.45 860.1 L572.88 865.1 L573.23 947 Z" fill="#000"/><path d="M576.93 947 L577.18 921.8 L577.55 916.8 L577.85 916.8 L578.23 921.8 L578.58 947 Z" fill="#000"/><path d="M595.00 947 L595.25 933.0 L595.55 928.0 L595.85 928.0 L596.15 933.0 L596.50 947 Z" fill="#000"/><path d="M642.62 947 L642.88 693.0 L643.65 688.0 L643.95 688.0 L644.72 693.0 L645.07 947 Z" fill="#000"/><path d="M645.80 947 L646.05 927.0 L646.35 922.0 L646.65 922.0 L646.95 927.0 L647.30 947 Z" fill="#000"/><path d="M651.47 947 L651.72 897.6 L652.15 892.6 L652.45 892.6 L652.88 897.6 L653.23 947 Z" fill="#000"/><path d="M654.30 947 L654.55 934.3 L654.85 929.3 L655.15 929.3 L655.45 934.3 L655.80 947 Z" fill="#000"/><path d="M678.00 947 L678.25 941.0 L678.55 936.0 L678.85 936.0 L679.15 941.0 L679.50 947 Z" fill="#000"/><path d="M696.58 947 L696.83 823.0 L697.45 818.0 L697.75 818.0 L698.38 823.0 L698.73 947 Z" fill="#000"/><path d="M860.68 947 L860.93 855.8 L861.55 850.8 L861.85 850.8 L862.48 855.8 L862.83 947 Z" fill="#000"/><path d="M916.07 947 L916.32 921.5 L916.75 916.5 L917.05 916.5 L917.48 921.5 L917.83 947 Z" fill="#000"/><path d="M970.62 947 L970.88 879.4 L971.35 874.4 L971.65 874.4 L972.12 879.4 L972.48 947 Z" fill="#000"/><path d="M1024.92 947 L1025.17 801.7 L1026.05 796.7 L1026.35 796.7 L1027.23 801.7 L1027.58 947 Z" fill="#000"/><path d="M1079.83 947 L1080.08 754.6 L1080.85 749.6 L1081.15 749.6 L1081.92 754.6 L1082.27 947 Z" fill="#000"/><path d="M1134.48 947 L1134.73 704.2 L1135.55 699.2 L1135.85 699.2 L1136.67 704.2 L1137.02 947 Z" fill="#000"/><path d="M1189.58 947 L1189.83 723.9 L1190.65 718.9 L1190.95 718.9 L1191.77 723.9 L1192.12 947 Z" fill="#000"/><path d="M1243.77 947 L1244.02 774.4 L1244.95 769.4 L1245.25 769.4 L1246.17 774.4 L1246.52 947 Z" fill="#000"/><path d="M1246.80 947 L1247.05 940.0 L1247.35 935.0 L1247.65 935.0 L1247.95 940.0 L1248.30 947 Z" fill="#000"/><path d="M1298.33 947 L1298.58 849.0 L1299.25 844.0 L1299.55 844.0 L1300.23 849.0 L1300.58 947 Z" fill="#000"/><path d="M1353.62 947 L1353.88 905.7 L1354.45 900.7 L1354.75 900.7 L1355.32 905.7 L1355.67 947 Z" fill="#000"/><path d="M1408.83 947 L1409.08 932.5 L1409.55 927.5 L1409.85 927.5 L1410.33 932.5 L1410.67 947 Z" fill="#000"/><path d="M1029.30 947 L1029.55 946.5 L1029.85 941.5 L1030.15 941.5 L1030.45 946.5 L1030.80 947 Z" fill="#000"/><path d="M1083.80 947 L1084.05 947.3 L1084.35 942.3 L1084.65 942.3 L1084.95 947.3 L1085.30 947 Z" fill="#000"/><path d="M493 797 L500.5 798.6" stroke="#5d6b3c" stroke-width="1"/><path d="M577.5 914.7 L596.7 912.4" stroke="#5d6b3c" stroke-width="1"/><path d="M652.7 890.7 L671.7 888.2" stroke="#5d6b3c" stroke-width="1"/><path d="M718.4 939.2 L722.3 937.4" stroke="#5d6b3c" stroke-width="1"/><path d="M878 943.2 L890 941" stroke="#5d6b3c" stroke-width="1"/><path d="M1190.8 717.6 L1199 715.4" stroke="#5d6b3c" stroke-width="1"/><path d="M1409.7 925.2 L1418 923" stroke="#5d6b3c" stroke-width="1"/><rect x="463.5" y="844.0" width="1" height="1.6" fill="#5d6b3c" opacity=".8"/><rect x="541.8" y="779.8" width="1" height="1.6" fill="#5d6b3c" opacity=".8"/><rect x="571.8" y="856.5" width="1" height="1.6" fill="#5d6b3c" opacity=".8"/><rect x="643.3" y="684.4" width="1" height="1.6" fill="#5d6b3c" opacity=".8"/><rect x="697.1" y="814.4" width="1" height="1.6" fill="#5d6b3c" opacity=".8"/><rect x="792.1" y="940.5" width="1" height="1.6" fill="#5d6b3c" opacity=".8"/><rect x="861.2" y="847.2" width="1" height="1.6" fill="#5d6b3c" opacity=".8"/><rect x="916.4" y="912.9" width="1" height="1.6" fill="#5d6b3c" opacity=".8"/><rect x="971.0" y="870.8" width="1" height="1.6" fill="#5d6b3c" opacity=".8"/><rect x="1025.7" y="793.1" width="1" height="1.6" fill="#5d6b3c" opacity=".8"/><rect x="1080.5" y="746.0" width="1" height="1.6" fill="#5d6b3c" opacity=".8"/><rect x="1135.2" y="695.6" width="1" height="1.6" fill="#5d6b3c" opacity=".8"/><rect x="1244.6" y="765.8" width="1" height="1.6" fill="#5d6b3c" opacity=".8"/><rect x="1298.9" y="840.4" width="1" height="1.6" fill="#5d6b3c" opacity=".8"/><rect x="1354.1" y="897.1" width="1" height="1.6" fill="#5d6b3c" opacity=".8"/></svg>
<span style="position:absolute;left:442.70px;top:829.00px;font-size:14px;line-height:14px;white-space:pre;letter-spacing:-0.105px;color:#1a1a1a;">195.10</span>
<span style="position:absolute;left:469.20px;top:781.00px;font-size:14px;line-height:14px;white-space:pre;letter-spacing:-0.071px;color:#1a1a1a;">262.67</span>
<span style="position:absolute;left:521.20px;top:763.00px;font-size:14px;line-height:14px;white-space:pre;letter-spacing:0.045px;color:#1a1a1a;">338.30</span>
<span style="position:absolute;left:551.50px;top:840.00px;font-size:14px;line-height:14px;white-space:pre;letter-spacing:-0.171px;color:#1a1a1a;">393.17</span>
<span style="position:absolute;left:575.20px;top:896.00px;font-size:14px;line-height:14px;white-space:pre;letter-spacing:-0.105px;color:#1a1a1a;">403.23</span>
<span style="position:absolute;left:622.30px;top:668.00px;font-size:14px;line-height:14px;white-space:pre;letter-spacing:-0.088px;color:#1a1a1a;">524.23</span>
<span style="position:absolute;left:650.70px;top:873.00px;font-size:14px;line-height:14px;white-space:pre;letter-spacing:-0.105px;color:#1a1a1a;">540.13</span>
<span style="position:absolute;left:676.30px;top:798.00px;font-size:14px;line-height:14px;white-space:pre;letter-spacing:-0.021px;color:#1a1a1a;">622.03</span>
<span style="position:absolute;left:701.50px;top:922.00px;font-size:14px;line-height:14px;white-space:pre;letter-spacing:-0.155px;color:#1a1a1a;">660.43</span>
<span style="position:absolute;left:771.60px;top:922.00px;font-size:14px;line-height:14px;white-space:pre;letter-spacing:-0.088px;color:#1a1a1a;">795.67</span>
<span style="position:absolute;left:840.50px;top:831.00px;font-size:14px;line-height:14px;white-space:pre;letter-spacing:-0.021px;color:#1a1a1a;">922.00</span>
<span style="position:absolute;left:868.00px;top:925.00px;font-size:14px;line-height:14px;white-space:pre;letter-spacing:-0.038px;color:#1a1a1a;">950.73</span>
<span style="position:absolute;left:891.70px;top:897.00px;font-size:14px;line-height:14px;white-space:pre;letter-spacing:-0.116px;color:#1a1a1a;">1022.00</span>
<span style="position:absolute;left:946.70px;top:853.00px;font-size:14px;line-height:14px;white-space:pre;letter-spacing:0.089px;color:#1a1a1a;">1121.97</span>
<span style="position:absolute;left:1001.80px;top:776.00px;font-size:14px;line-height:14px;white-space:pre;letter-spacing:-0.058px;color:#1a1a1a;">1222.03</span>
<span style="position:absolute;left:1055.70px;top:731.00px;font-size:14px;line-height:14px;white-space:pre;letter-spacing:-0.044px;color:#1a1a1a;">1322.03</span>
<span style="position:absolute;left:1110.90px;top:680.00px;font-size:14px;line-height:14px;white-space:pre;letter-spacing:-0.058px;color:#1a1a1a;">1421.97</span>
<span style="position:absolute;left:1173.90px;top:700.00px;font-size:14px;line-height:14px;white-space:pre;letter-spacing:-0.058px;color:#1a1a1a;">1521.97</span>
<span style="position:absolute;left:1220.70px;top:749.00px;font-size:14px;line-height:14px;white-space:pre;letter-spacing:-0.058px;color:#1a1a1a;">1621.97</span>
<span style="position:absolute;left:1274.60px;top:824.00px;font-size:14px;line-height:14px;white-space:pre;letter-spacing:-0.044px;color:#1a1a1a;">1721.97</span>
<span style="position:absolute;left:1329.80px;top:881.00px;font-size:14px;line-height:14px;white-space:pre;letter-spacing:-0.116px;color:#1a1a1a;">1821.93</span>
<span style="position:absolute;left:1392.80px;top:907.00px;font-size:14px;line-height:14px;white-space:pre;letter-spacing:-0.001px;color:#1a1a1a;">1922.00</span>
<span style="position:absolute;left:420.40px;top:940.00px;font-size:14px;line-height:14px;white-space:pre;letter-spacing:-0.197px;color:#1a1a1a;">0</span>
<span style="position:absolute;left:413.00px;top:888.00px;font-size:14px;line-height:14px;white-space:pre;letter-spacing:-0.289px;color:#1a1a1a;">20</span>
<span style="position:absolute;left:413.00px;top:836.00px;font-size:14px;line-height:14px;white-space:pre;letter-spacing:-0.289px;color:#1a1a1a;">40</span>
<span style="position:absolute;left:413.00px;top:784.00px;font-size:14px;line-height:14px;white-space:pre;letter-spacing:-0.289px;color:#1a1a1a;">60</span>
<span style="position:absolute;left:413.00px;top:732.00px;font-size:14px;line-height:14px;white-space:pre;letter-spacing:-0.289px;color:#1a1a1a;">80</span>
<span style="position:absolute;left:405.70px;top:680.00px;font-size:14px;line-height:14px;white-space:pre;letter-spacing:-0.353px;color:#1a1a1a;">100</span>
<span style="position:absolute;left:454.40px;top:960.00px;font-size:14px;line-height:14px;white-space:pre;letter-spacing:0.014px;color:#1a1a1a;">200</span>
<span style="position:absolute;left:563.92px;top:960.00px;font-size:14px;line-height:14px;white-space:pre;letter-spacing:0.014px;color:#1a1a1a;">400</span>
<span style="position:absolute;left:673.44px;top:960.00px;font-size:14px;line-height:14px;white-space:pre;letter-spacing:0.014px;color:#1a1a1a;">600</span>
<span style="position:absolute;left:782.96px;top:960.00px;font-size:14px;line-height:14px;white-space:pre;letter-spacing:0.014px;color:#1a1a1a;">800</span>
<span style="position:absolute;left:888.68px;top:960.00px;font-size:14px;line-height:14px;white-space:pre;letter-spacing:-0.039px;color:#1a1a1a;">1000</span>
<span style="position:absolute;left:998.20px;top:960.00px;font-size:14px;line-height:14px;white-space:pre;letter-spacing:-0.039px;color:#1a1a1a;">1200</span>
<span style="position:absolute;left:1107.72px;top:960.00px;font-size:14px;line-height:14px;white-space:pre;letter-spacing:-0.039px;color:#1a1a1a;">1400</span>
<span style="position:absolute;left:1217.24px;top:960.00px;font-size:14px;line-height:14px;white-space:pre;letter-spacing:-0.039px;color:#1a1a1a;">1600</span>
<span style="position:absolute;left:1326.76px;top:960.00px;font-size:14px;line-height:14px;white-space:pre;letter-spacing:-0.039px;color:#1a1a1a;">1800</span>
<span style="position:absolute;left:1436.28px;top:960.00px;font-size:14px;line-height:14px;white-space:pre;letter-spacing:-0.039px;color:#1a1a1a;">2000</span>
<span style="position:absolute;left:933.00px;top:979.00px;font-size:14px;line-height:14px;white-space:pre;letter-spacing:0.812px;color:#1a1a1a;">m/z</span>
<div style="position:absolute;left:283.6px;top:786px;width:200px;height:17px;transform:rotate(-90deg);text-align:center;font-size:14px;line-height:17px;color:#1a1a1a;white-space:nowrap;letter-spacing:0.08px">Relative Intensity</div>
<div style="position:absolute;left:1511px;top:154px;width:377px;height:859px;background:#fff;border-left:1px solid #6f8aa8;border-right:1px solid #8ea3bb;border-bottom:1px solid #8ea3bb;"></div>
<div style="position:absolute;left:1505px;top:160px;width:1px;height:847px;background:#dfeaf7;"></div>
<div style="position:absolute;left:1511px;top:154px;width:376px;height:1px;background:#f3f6fa;"></div>
<div style="position:absolute;left:1511px;top:155px;width:376px;height:32px;background:linear-gradient(180deg,#6a9ad0 0,#5a8dc5 30%,#487ab3 65%,#3a69a0 100%);border-bottom:1px solid #2f5f96;border-left:1px solid #5b7fa6;"></div>
<span style="position:absolute;left:1517.30px;top:165.00px;font-size:12px;line-height:12px;white-space:pre;letter-spacing:0.000px;color:#f4f8fd;font-weight:700;transform:scaleX(0.8784);transform-origin:0 0;">STATUS</span>
<span style="position:absolute;left:1591.40px;top:165.00px;font-size:12.5px;line-height:12.5px;white-space:pre;letter-spacing:-0.411px;color:#eef3f9;-webkit-text-stroke:0.2px #eef3f9;">By Function</span>
<svg style="left:1694px;top:169px" width="8" height="4" viewBox="0 0 8 4"><path d="M0 0 H8 L4 4 Z" fill="#3a3f47"/></svg>
<div style="position:absolute;left:1870px;top:187px;width:17px;height:825px;background:#f0f0f0;"></div>
<div style="position:absolute;left:1870px;top:204.5px;width:17px;height:732px;background:#cdcdcd;"></div>
<svg style="left:1873px;top:192.5px" width="11" height="8" viewBox="0 0 11 8"><path d="M1.8 6 L5.5 2.3 L9.2 6" stroke="#8f8f8f" stroke-width="1" fill="none"/></svg>
<svg style="left:1873px;top:1000.5px" width="11" height="8" viewBox="0 0 11 8"><path d="M1.8 1.6 L5.5 5.3 L9.2 1.6" stroke="#8f8f8f" stroke-width="1" fill="none"/></svg>
<div style="position:absolute;left:1538px;top:195.0px;width:14px;height:12px;background:linear-gradient(180deg,#8ccc72,#79c25e);border:1px solid #5fa845;border-radius:3.5px;"></div>
<svg style="left:1519px;top:197.0px" width="8" height="8" viewBox="0 0 8 8"><path d="M7 0.5 V7 H0.5 Z" fill="#3f3f3f"/></svg>
<span style="position:absolute;left:1560.20px;top:196.00px;font-size:11.75px;line-height:11.75px;white-space:pre;letter-spacing:0.117px;color:#111;-webkit-text-stroke:0.36px #111;">Ion Source</span>
<span style="position:absolute;left:1579.20px;top:220.00px;font-size:11.75px;line-height:11.75px;white-space:pre;letter-spacing:0.141px;color:#111;-webkit-text-stroke:0.36px #111;">Spray Voltage</span>
<span style="position:absolute;left:1849.40px;top:220.00px;font-size:11.75px;line-height:11.75px;white-space:pre;letter-spacing:-0.244px;color:#222;">V</span>
<span style="position:absolute;left:1806.05px;top:220.00px;font-size:11.75px;line-height:11.75px;white-space:pre;letter-spacing:-0.150px;color:#222;">4187.0</span>
<span style="position:absolute;left:1579.20px;top:244.00px;font-size:11.75px;line-height:11.75px;white-space:pre;letter-spacing:0.112px;color:#111;-webkit-text-stroke:0.36px #111;">Spray Current</span>
<span style="position:absolute;left:1842.00px;top:244.00px;font-size:11.75px;line-height:11.75px;white-space:pre;letter-spacing:0.195px;color:#222;">µA</span>
<span style="position:absolute;left:1817.76px;top:244.00px;font-size:11.75px;line-height:11.75px;white-space:pre;letter-spacing:-0.136px;color:#222;">0.3</span>
<span style="position:absolute;left:1579.20px;top:268.00px;font-size:11.75px;line-height:11.75px;white-space:pre;letter-spacing:0.200px;color:#111;-webkit-text-stroke:0.36px #111;">Vaporizer Temp</span>
<span style="position:absolute;left:1845.70px;top:268.00px;font-size:11.75px;line-height:11.75px;white-space:pre;letter-spacing:-0.944px;color:#222;">°C</span>
<span style="position:absolute;left:1815.10px;top:268.00px;font-size:11.75px;line-height:11.75px;white-space:pre;letter-spacing:-0.143px;color:#222;">39.0</span>
<div style="position:absolute;left:1557px;top:291.0px;width:14px;height:12px;background:linear-gradient(180deg,#8ccc72,#79c25e);border:1px solid #5fa845;border-radius:3.5px;"></div>
<span style="position:absolute;left:1579.20px;top:292.00px;font-size:11.75px;line-height:11.75px;white-space:pre;letter-spacing:-0.186px;color:#111;-webkit-text-stroke:0.36px #111;">Sheath Gas</span>
<span style="position:absolute;left:1763.60px;top:292.00px;font-size:11.75px;line-height:11.75px;white-space:pre;letter-spacing:0.135px;color:#222;">Arb (~0.22 L/Min)</span>
<span style="position:absolute;left:1739.36px;top:292.00px;font-size:11.75px;line-height:11.75px;white-space:pre;letter-spacing:-0.136px;color:#222;">1.0</span>
<span style="position:absolute;left:1579.20px;top:316.00px;font-size:11.75px;line-height:11.75px;white-space:pre;letter-spacing:-0.152px;color:#111;-webkit-text-stroke:0.36px #111;">Aux Gas</span>
<span style="position:absolute;left:1763.60px;top:316.00px;font-size:11.75px;line-height:11.75px;white-space:pre;letter-spacing:0.135px;color:#222;">Arb (~0.27 L/Min)</span>
<span style="position:absolute;left:1739.36px;top:316.00px;font-size:11.75px;line-height:11.75px;white-space:pre;letter-spacing:-0.136px;color:#222;">0.2</span>
<span style="position:absolute;left:1579.20px;top:340.00px;font-size:11.75px;line-height:11.75px;white-space:pre;letter-spacing:-0.283px;color:#111;-webkit-text-stroke:0.36px #111;">Sweep Gas</span>
<span style="position:absolute;left:1770.20px;top:340.00px;font-size:11.75px;line-height:11.75px;white-space:pre;letter-spacing:0.139px;color:#222;">Arb (~0.5 L/Min)</span>
<span style="position:absolute;left:1745.96px;top:340.00px;font-size:11.75px;line-height:11.75px;white-space:pre;letter-spacing:-0.136px;color:#222;">0.3</span>
<div style="position:absolute;left:1557px;top:363.0px;width:14px;height:12px;background:linear-gradient(180deg,#8ccc72,#79c25e);border:1px solid #5fa845;border-radius:3.5px;"></div>
<span style="position:absolute;left:1579.20px;top:364.00px;font-size:11.75px;line-height:11.75px;white-space:pre;letter-spacing:0.128px;color:#111;-webkit-text-stroke:0.36px #111;">Ion Transfer Tube Temp</span>
<span style="position:absolute;left:1845.70px;top:364.00px;font-size:11.75px;line-height:11.75px;white-space:pre;letter-spacing:-0.944px;color:#222;">°C</span>
<span style="position:absolute;left:1808.73px;top:364.00px;font-size:11.75px;line-height:11.75px;white-space:pre;letter-spacing:-0.147px;color:#222;">274.8</span>
<span style="position:absolute;left:1579.20px;top:388.00px;font-size:11.75px;line-height:11.75px;white-space:pre;letter-spacing:-0.172px;color:#111;-webkit-text-stroke:0.36px #111;">S-lens DC</span>
<span style="position:absolute;left:1849.40px;top:388.00px;font-size:11.75px;line-height:11.75px;white-space:pre;letter-spacing:-0.244px;color:#222;">V</span>
<span style="position:absolute;left:1818.80px;top:388.00px;font-size:11.75px;line-height:11.75px;white-space:pre;letter-spacing:-0.143px;color:#222;">36.0</span>
<span style="position:absolute;left:1579.20px;top:412.00px;font-size:11.75px;line-height:11.75px;white-space:pre;letter-spacing:-0.101px;color:#111;-webkit-text-stroke:0.36px #111;">Source Pressure</span>
<span style="position:absolute;left:1836.90px;top:412.00px;font-size:11.75px;line-height:11.75px;white-space:pre;letter-spacing:-0.037px;color:#222;">Torr</span>
<span style="position:absolute;left:1799.93px;top:412.00px;font-size:11.75px;line-height:11.75px;white-space:pre;letter-spacing:-0.147px;color:#222;">2.686</span>
<svg style="left:1521px;top:436.5px" width="7" height="10" viewBox="0 0 7 10"><path d="M1 1 L5.5 5 L1 9 Z" fill="#fff" stroke="#a3a3a3" stroke-width="1"/></svg>
<span style="position:absolute;left:1560.20px;top:436.00px;font-size:11.75px;line-height:11.75px;white-space:pre;letter-spacing:0.003px;color:#111;-webkit-text-stroke:0.36px #111;">Ion Guide 1</span>
<svg style="left:1521px;top:460.5px" width="7" height="10" viewBox="0 0 7 10"><path d="M1 1 L5.5 5 L1 9 Z" fill="#fff" stroke="#a3a3a3" stroke-width="1"/></svg>
<span style="position:absolute;left:1560.20px;top:460.00px;font-size:11.75px;line-height:11.75px;white-space:pre;letter-spacing:0.308px;color:#111;-webkit-text-stroke:0.36px #111;">Quadrupole</span>
<svg style="left:1521px;top:484.5px" width="7" height="10" viewBox="0 0 7 10"><path d="M1 1 L5.5 5 L1 9 Z" fill="#fff" stroke="#a3a3a3" stroke-width="1"/></svg>
<span style="position:absolute;left:1560.20px;top:484.00px;font-size:11.75px;line-height:11.75px;white-space:pre;letter-spacing:-0.121px;color:#111;-webkit-text-stroke:0.36px #111;">C-Trap</span>
<svg style="left:1521px;top:508.5px" width="7" height="10" viewBox="0 0 7 10"><path d="M1 1 L5.5 5 L1 9 Z" fill="#fff" stroke="#a3a3a3" stroke-width="1"/></svg>
<span style="position:absolute;left:1560.20px;top:508.00px;font-size:11.75px;line-height:11.75px;white-space:pre;letter-spacing:0.406px;color:#111;-webkit-text-stroke:0.36px #111;">Orbitrap</span>
<div style="position:absolute;left:1538px;top:531.0px;width:14px;height:12px;background:linear-gradient(180deg,#8ccc72,#79c25e);border:1px solid #5fa845;border-radius:3.5px;"></div>
<svg style="left:1521px;top:532.5px" width="7" height="10" viewBox="0 0 7 10"><path d="M1 1 L5.5 5 L1 9 Z" fill="#fff" stroke="#a3a3a3" stroke-width="1"/></svg>
<span style="position:absolute;left:1560.20px;top:532.00px;font-size:11.75px;line-height:11.75px;white-space:pre;letter-spacing:-0.134px;color:#111;-webkit-text-stroke:0.36px #111;">HCD Cell</span>
<svg style="left:1519px;top:557.0px" width="8" height="8" viewBox="0 0 8 8"><path d="M7 0.5 V7 H0.5 Z" fill="#3f3f3f"/></svg>
<span style="position:absolute;left:1560.20px;top:556.00px;font-size:11.75px;line-height:11.75px;white-space:pre;letter-spacing:0.134px;color:#111;-webkit-text-stroke:0.36px #111;">Ion Trap</span>
<span style="position:absolute;left:1579.20px;top:580.00px;font-size:11.75px;line-height:11.75px;white-space:pre;letter-spacing:0.023px;color:#111;-webkit-text-stroke:0.36px #111;">Front Lens</span>
<span style="position:absolute;left:1849.40px;top:580.00px;font-size:11.75px;line-height:11.75px;white-space:pre;letter-spacing:-0.244px;color:#222;">V</span>
<span style="position:absolute;left:1821.36px;top:580.00px;font-size:11.75px;line-height:11.75px;white-space:pre;letter-spacing:-0.127px;color:#222;">-5.8</span>
<span style="position:absolute;left:1579.20px;top:604.00px;font-size:11.75px;line-height:11.75px;white-space:pre;letter-spacing:0.108px;color:#111;-webkit-text-stroke:0.36px #111;">HP Front Section</span>
<span style="position:absolute;left:1849.40px;top:604.00px;font-size:11.75px;line-height:11.75px;white-space:pre;letter-spacing:-0.244px;color:#222;">V</span>
<span style="position:absolute;left:1821.36px;top:604.00px;font-size:11.75px;line-height:11.75px;white-space:pre;letter-spacing:-0.127px;color:#222;">-2.6</span>
<span style="position:absolute;left:1579.20px;top:628.00px;font-size:11.75px;line-height:11.75px;white-space:pre;letter-spacing:0.052px;color:#111;-webkit-text-stroke:0.36px #111;">HP Center Section</span>
<span style="position:absolute;left:1849.40px;top:628.00px;font-size:11.75px;line-height:11.75px;white-space:pre;letter-spacing:-0.244px;color:#222;">V</span>
<span style="position:absolute;left:1814.97px;top:628.00px;font-size:11.75px;line-height:11.75px;white-space:pre;letter-spacing:-0.134px;color:#222;">-17.6</span>
<span style="position:absolute;left:1579.20px;top:652.00px;font-size:11.75px;line-height:11.75px;white-space:pre;letter-spacing:-0.017px;color:#111;-webkit-text-stroke:0.36px #111;">HP Back Section</span>
<span style="position:absolute;left:1849.40px;top:652.00px;font-size:11.75px;line-height:11.75px;white-space:pre;letter-spacing:-0.244px;color:#222;">V</span>
<span style="position:absolute;left:1821.36px;top:652.00px;font-size:11.75px;line-height:11.75px;white-space:pre;letter-spacing:-0.127px;color:#222;">-2.6</span>
<span style="position:absolute;left:1579.20px;top:676.00px;font-size:11.75px;line-height:11.75px;white-space:pre;letter-spacing:-0.047px;color:#111;-webkit-text-stroke:0.36px #111;">Center Lens</span>
<span style="position:absolute;left:1849.40px;top:676.00px;font-size:11.75px;line-height:11.75px;white-space:pre;letter-spacing:-0.244px;color:#222;">V</span>
<span style="position:absolute;left:1818.80px;top:676.00px;font-size:11.75px;line-height:11.75px;white-space:pre;letter-spacing:-0.143px;color:#222;">32.4</span>
<span style="position:absolute;left:1579.20px;top:700.00px;font-size:11.75px;line-height:11.75px;white-space:pre;letter-spacing:0.055px;color:#111;-webkit-text-stroke:0.36px #111;">LP Front Section</span>
<span style="position:absolute;left:1849.40px;top:700.00px;font-size:11.75px;line-height:11.75px;white-space:pre;letter-spacing:-0.244px;color:#222;">V</span>
<span style="position:absolute;left:1814.97px;top:700.00px;font-size:11.75px;line-height:11.75px;white-space:pre;letter-spacing:-0.134px;color:#222;">-10.6</span>
<span style="position:absolute;left:1579.20px;top:724.00px;font-size:11.75px;line-height:11.75px;white-space:pre;letter-spacing:0.014px;color:#111;-webkit-text-stroke:0.36px #111;">LP Center Section</span>
<span style="position:absolute;left:1849.40px;top:724.00px;font-size:11.75px;line-height:11.75px;white-space:pre;letter-spacing:-0.244px;color:#222;">V</span>
<span style="position:absolute;left:1814.97px;top:724.00px;font-size:11.75px;line-height:11.75px;white-space:pre;letter-spacing:-0.134px;color:#222;">-25.6</span>
<span style="position:absolute;left:1579.20px;top:748.00px;font-size:11.75px;line-height:11.75px;white-space:pre;letter-spacing:-0.081px;color:#111;-webkit-text-stroke:0.36px #111;">LP Back Section</span>
<span style="position:absolute;left:1849.40px;top:748.00px;font-size:11.75px;line-height:11.75px;white-space:pre;letter-spacing:-0.244px;color:#222;">V</span>
<span style="position:absolute;left:1814.97px;top:748.00px;font-size:11.75px;line-height:11.75px;white-space:pre;letter-spacing:-0.134px;color:#222;">-10.6</span>
<span style="position:absolute;left:1579.20px;top:772.00px;font-size:11.75px;line-height:11.75px;white-space:pre;letter-spacing:-0.186px;color:#111;-webkit-text-stroke:0.36px #111;">Back Lens</span>
<span style="position:absolute;left:1849.40px;top:772.00px;font-size:11.75px;line-height:11.75px;white-space:pre;letter-spacing:-0.244px;color:#222;">V</span>
<span style="position:absolute;left:1818.80px;top:772.00px;font-size:11.75px;line-height:11.75px;white-space:pre;letter-spacing:-0.143px;color:#222;">32.4</span>
<span style="position:absolute;left:1579.20px;top:796.00px;font-size:11.75px;line-height:11.75px;white-space:pre;letter-spacing:0.578px;color:#111;-webkit-text-stroke:0.36px #111;">Multiplier</span>
<span style="position:absolute;left:1849.40px;top:796.00px;font-size:11.75px;line-height:11.75px;white-space:pre;letter-spacing:-0.244px;color:#222;">V</span>
<span style="position:absolute;left:1811.79px;top:796.00px;font-size:11.75px;line-height:11.75px;white-space:pre;letter-spacing:-0.150px;color:#222;">-3120</span>
<span style="position:absolute;left:1579.20px;top:820.00px;font-size:11.75px;line-height:11.75px;white-space:pre;letter-spacing:0.350px;color:#111;-webkit-text-stroke:0.36px #111;">Dynode</span>
<span style="position:absolute;left:1849.40px;top:820.00px;font-size:11.75px;line-height:11.75px;white-space:pre;letter-spacing:-0.244px;color:#222;">V</span>
<span style="position:absolute;left:1805.42px;top:820.00px;font-size:11.75px;line-height:11.75px;white-space:pre;letter-spacing:-0.152px;color:#222;">-12253</span>
<span style="position:absolute;left:1579.20px;top:844.00px;font-size:11.75px;line-height:11.75px;white-space:pre;letter-spacing:0.395px;color:#111;-webkit-text-stroke:0.36px #111;">Coulombmeter</span>
<span style="position:absolute;left:1850.00px;top:844.00px;font-size:11.75px;line-height:11.75px;white-space:pre;letter-spacing:-1.500px;color:#222;">C</span>
<span style="position:absolute;left:1764.61px;top:844.00px;font-size:11.75px;line-height:11.75px;white-space:pre;letter-spacing:-0.152px;color:#222;">2.491543e-004</span>
<span style="position:absolute;left:1579.20px;top:868.00px;font-size:11.75px;line-height:11.75px;white-space:pre;letter-spacing:0.002px;color:#111;-webkit-text-stroke:0.36px #111;">Ion Gauge Pressure</span>
<span style="position:absolute;left:1803.37px;top:868.00px;font-size:11.75px;line-height:11.75px;white-space:pre;letter-spacing:-0.145px;color:#222;">1.5e-005</span>
<div style="position:absolute;left:1538px;top:891.0px;width:14px;height:12px;background:linear-gradient(180deg,#8ccc72,#79c25e);border:1px solid #5fa845;border-radius:3.5px;"></div>
<svg style="left:1519px;top:893.0px" width="8" height="8" viewBox="0 0 8 8"><path d="M7 0.5 V7 H0.5 Z" fill="#3f3f3f"/></svg>
<span style="position:absolute;left:1560.20px;top:892.00px;font-size:11.75px;line-height:11.75px;white-space:pre;letter-spacing:-0.667px;color:#111;-webkit-text-stroke:0.36px #111;">ETD</span>
<span style="position:absolute;left:1579.20px;top:916.00px;font-size:11.75px;line-height:11.75px;white-space:pre;letter-spacing:0.154px;color:#111;-webkit-text-stroke:0.36px #111;">Discharge Voltage</span>
<span style="position:absolute;left:1849.40px;top:916.00px;font-size:11.75px;line-height:11.75px;white-space:pre;letter-spacing:-0.244px;color:#222;">V</span>
<span style="position:absolute;left:1825.16px;top:916.00px;font-size:11.75px;line-height:11.75px;white-space:pre;letter-spacing:-0.136px;color:#222;">9.0</span>
<div style="position:absolute;left:1557px;top:939.0px;width:14px;height:12px;background:linear-gradient(180deg,#8ccc72,#79c25e);border:1px solid #5fa845;border-radius:3.5px;"></div>
<span style="position:absolute;left:1579.20px;top:940.00px;font-size:11.75px;line-height:11.75px;white-space:pre;letter-spacing:-0.061px;color:#111;-webkit-text-stroke:0.36px #111;">Oven 1 Temp</span>
<span style="position:absolute;left:1845.70px;top:940.00px;font-size:11.75px;line-height:11.75px;white-space:pre;letter-spacing:-0.944px;color:#222;">°C</span>
<span style="position:absolute;left:1815.10px;top:940.00px;font-size:11.75px;line-height:11.75px;white-space:pre;letter-spacing:-0.143px;color:#222;">74.9</span>
<div style="position:absolute;left:1557px;top:963.0px;width:14px;height:12px;background:linear-gradient(180deg,#8ccc72,#79c25e);border:1px solid #5fa845;border-radius:3.5px;"></div>
<span style="position:absolute;left:1579.20px;top:964.00px;font-size:11.75px;line-height:11.75px;white-space:pre;letter-spacing:0.234px;color:#111;-webkit-text-stroke:0.36px #111;">Split Temp</span>
<span style="position:absolute;left:1845.70px;top:964.00px;font-size:11.75px;line-height:11.75px;white-space:pre;letter-spacing:-0.944px;color:#222;">°C</span>
<span style="position:absolute;left:1808.73px;top:964.00px;font-size:11.75px;line-height:11.75px;white-space:pre;letter-spacing:-0.147px;color:#222;">130.0</span>
<span style="position:absolute;left:1579.20px;top:988.00px;font-size:11.75px;line-height:11.75px;white-space:pre;letter-spacing:-0.247px;color:#111;-webkit-text-stroke:0.36px #111;">Valve 1</span>
<span style="position:absolute;left:1835.30px;top:988.00px;font-size:11.75px;line-height:11.75px;white-space:pre;letter-spacing:0.034px;color:#222;">psig</span>
<span style="position:absolute;left:1804.70px;top:988.00px;font-size:11.75px;line-height:11.75px;white-space:pre;letter-spacing:-0.143px;color:#222;">20.1</span>
<div style="position:absolute;left:1887px;top:154px;width:33px;height:859px;background:linear-gradient(90deg,#ececec 0,#e6e6e6 30%,#d5d5d5 100%);border-left:1px solid #74869c;border-right:1px solid #6d84a0;"></div>
<div style="position:absolute;left:1888px;top:154px;width:32px;height:4px;background:#fff;"></div>
<div style="position:absolute;left:1888px;top:158px;width:32px;height:30px;background:linear-gradient(180deg,#6a9ad0,#3f6fa8);"></div>
<svg style="left:1891px;top:159px" width="26" height="26" viewBox="0 0 26 26"><defs><radialGradient id="rb" cx="50%" cy="40%" r="60%"><stop offset="0" stop-color="#f4f8fc"/><stop offset="1" stop-color="#cfdfef"/></radialGradient></defs><circle cx="12.7" cy="12.5" r="11" fill="url(#rb)" stroke="#fff" stroke-width="1.2"/><path d="M10.2 7.8 L15.3 12.6 L10.2 17.4" stroke="#3c6faa" stroke-width="2.6" fill="none"/></svg>
<div style="position:absolute;left:1888px;top:188px;width:32px;height:75px;background:linear-gradient(90deg,#44638f 0,#3b5b88 49%,#30507e 51%,#2c4b79 100%);"></div>
<div style="position:absolute;left:1888px;top:263px;width:32px;height:84px;background:linear-gradient(90deg,#5f92cb 0,#4b7fba 40%,#3b69a2 100%);border-top:1px solid #6a9ad0;"></div>
<div style="position:absolute;left:1888px;top:347px;width:32px;height:96.5px;background:linear-gradient(90deg,#5f92cb 0,#4b7fba 40%,#3b69a2 100%);border-top:1px solid #6a9ad0;"></div>
<div style="position:absolute;left:1853.0px;top:216.4px;width:100px;height:16px;transform:rotate(-90deg) scaleX(0.858);text-align:center;font-size:12.5px;line-height:16px;font-weight:700;color:#fff;white-space:nowrap;">STATUS</div>
<div style="position:absolute;left:1853.0px;top:297.0px;width:100px;height:16px;transform:rotate(-90deg) scaleX(0.866);text-align:center;font-size:12.5px;line-height:16px;font-weight:700;color:#fff;white-space:nowrap;">HISTORY</div>
<div style="position:absolute;left:1853.0px;top:386.4px;width:100px;height:16px;transform:rotate(-90deg) scaleX(0.840);text-align:center;font-size:12.5px;line-height:16px;font-weight:700;color:#fff;white-space:nowrap;">FAVORITES</div>
<div style="position:absolute;left:1888px;top:1006px;width:31px;height:1px;background:#6486ae;"></div>
<div style="position:absolute;left:1888px;top:1007px;width:31px;height:4px;background:#d9e3ef;"></div>
<div style="position:absolute;left:1888px;top:443.5px;width:1px;height:563px;background:#e3edf7;"></div>
<div style="position:absolute;left:1918px;top:443.5px;width:1px;height:563px;background:#dfe9f4;"></div>
<div style="position:absolute;left:0px;top:1014px;width:1920px;height:26px;background:linear-gradient(180deg,#ffffff 0,#f6f6f8 35%,#e9e9ec 75%,#dddde0 100%);"></div>
<div style="position:absolute;left:367px;top:1012px;width:1553px;height:1px;background:#8fa0b6;"></div>
<div style="position:absolute;left:0px;top:1013px;width:1920px;height:1px;background:#8a9bb2;"></div>
<svg style="left:6px;top:1018px" width="24" height="20" viewBox="0 0 24 20"><g transform="rotate(-22 12 10)"><path d="M1.5 10.2 Q1.5 8.6 3 8.6 H13.2 Q14 5.2 17.4 4.8 Q19.3 4.7 20.6 5.6 L17.3 8 L17.9 10.6 L20.6 11.3 L22.4 8.6 Q22.9 11.2 21 13 Q18.6 15.2 15 13.4 Q14 12.6 13.4 11.8 H3 Q1.5 11.8 1.5 10.2 Z" fill="#6b6b6b"/></g></svg>
<svg style="left:1730px;top:1015px" width="190" height="24" viewBox="0 0 190 24"><g fill="none" stroke="#bdbdbf" stroke-width="1.4"><rect x="7.8" y="3.8" width="20.6" height="16.6"/></g><g fill="#bdbdbf"><rect x="7.8" y="3.8" width="20.6" height="3.4"/><rect x="10.5" y="9" width="1.6" height="11"/><rect x="13.6" y="9" width="1.6" height="11"/><rect x="16.7" y="9" width="1.6" height="11"/><rect x="19.8" y="11" width="1.6" height="9"/><rect x="22.9" y="13" width="1.6" height="7"/><rect x="25.6" y="15" width="1.6" height="5"/></g><g fill="none" stroke="#bdbdbf" stroke-width="1.4"><rect x="37.8" y="3.8" width="20.6" height="16.6"/><path d="M40 18 L43.5 10 L46 17 Q47.5 19 49 16 L51 10 Q52 8.6 53 10 L56 18" stroke-width="1.8"/></g><rect x="37.8" y="3.8" width="20.6" height="3.2" fill="#bdbdbf"/><g fill="none" stroke="#bdbdbf" stroke-width="3"><path d="M84 16.2 A7 7 0 1 1 79.5 5.6"/></g><path d="M78 1.2 L84.6 5.4 L78 9.8 Z" fill="#bdbdbf"/><circle cx="78.6" cy="12.6" r="1" fill="#bdbdbf"/><rect x="97.9" y="4.7" width="20.2" height="14.8" fill="none" stroke="#bdbdbf" stroke-width="1.4"/><g fill="#bdbdbf"><rect x="100.2" y="7" width="3.6" height="10.4"/><rect x="105.4" y="7" width="4.6" height="4.4"/><rect x="111.2" y="7" width="4.8" height="4.4"/><rect x="105.4" y="12.8" width="10.6" height="4.6"/></g><rect x="128.29999999999998" y="4.7" width="20.2" height="14.8" fill="none" stroke="#bdbdbf" stroke-width="1.4"/><g fill="#bdbdbf"><rect x="130.6" y="7" width="3.6" height="10.4"/><rect x="135.79999999999998" y="7" width="10.6" height="4.4"/><rect x="135.79999999999998" y="12.8" width="10.6" height="4.6"/></g><rect x="157.89999999999998" y="4.7" width="20.2" height="14.8" fill="none" stroke="#bdbdbf" stroke-width="1.4"/><g fill="#bdbdbf"><rect x="160.2" y="7" width="3.6" height="10.4"/><rect x="165.39999999999998" y="7" width="10.6" height="10.4"/></g></svg>
<div style="position:absolute;left:0px;top:1040px;width:1920px;height:40px;background:linear-gradient(90deg,#21353e 0,#22343e 40%,#1f3142 62%,#1b2b45 80%,#1a2945 100%);"></div>
<div style="position:absolute;left:48px;top:1040px;width:344px;height:40px;background:#f3f3f3;border-top:1px solid #cfcfcf;border-right:1px solid #bdbdbd;"></div>
<svg style="left:15px;top:1051px" width="18" height="18" viewBox="0 0 18 18"><g fill="#fff"><path d="M0.6 3 L7.4 2 V8.3 H0.6 Z"/><path d="M8.3 1.9 L16.8 0.7 V8.3 H8.3 Z"/><path d="M0.6 9.2 H7.4 V15.5 L0.6 14.5 Z"/><path d="M8.3 9.2 H16.8 V16.8 L8.3 15.6 Z"/></g></svg>
<svg style="left:59px;top:1051px" width="20" height="20" viewBox="0 0 20 20"><circle cx="11.6" cy="7" r="5" fill="none" stroke="#222" stroke-width="1.3"/><path d="M8 10.8 L1.6 17.4" stroke="#222" stroke-width="1.4"/></svg>
<span style="position:absolute;left:88.50px;top:1054.00px;font-size:14.5px;line-height:14.5px;white-space:pre;letter-spacing:-0.035px;color:#333;">Type here to search</span>
<svg style="left:333px;top:1041px" width="50" height="39" viewBox="0 0 50 39">
<g fill="#4fb04a"><ellipse cx="13" cy="33" rx="4.6" ry="7" transform="rotate(-25 13 33)"/><ellipse cx="6" cy="34" rx="3.6" ry="5.6" transform="rotate(-40 6 34)"/><ellipse cx="36" cy="21" rx="5" ry="6.6"/><ellipse cx="43" cy="16" rx="4.4" ry="4.8"/><ellipse cx="32" cy="30" rx="6" ry="6"/><ellipse cx="24" cy="36" rx="5" ry="5"/></g>
<g fill="#7ed36f"><circle cx="35" cy="17.5" r="1.6"/><circle cx="44" cy="12.6" r="1.6"/><circle cx="40" cy="13" r="1.2"/></g>
<path d="M12.8 4.4 L10.4 0.8 L8.4 5.6 Q6 8.4 7.2 12 Q8 20 14 24.6 Q19 28.4 26 31 L34 36 L35.2 34 L28.6 28.4 Q22.4 18.6 16.4 12.4 Q15.6 6.8 12.8 4.4 Z" fill="#cbb9a3"/>
<path d="M13 15 Q19 19.6 25.6 28.8 Q19 26.6 14.6 22.4 Z" fill="#b98678"/><path d="M26 29 L35 35.6 L33.6 36.6 L25 31.4 Z" fill="#b2543f"/>
<path d="M10.4 0.8 L12.8 4.4 L9.4 5.8 Z" fill="#d2573c"/><path d="M4.2 8.6 L8.6 7 L9.2 11 Z" fill="#f08a1d"/><path d="M7.6 7.4 Q10.6 6.6 11 9.6 Q9.4 11.8 7.6 10.8 Z" fill="#d9482b"/><circle cx="9.8" cy="7.4" r="0.8" fill="#222"/></svg>
<svg style="left:406px;top:1050px" width="20" height="20" viewBox="0 0 20 20"><circle cx="9.8" cy="10" r="6.8" fill="none" stroke="#fff" stroke-width="1.7"/></svg>
<svg style="left:455px;top:1051px" width="18" height="17" viewBox="0 0 18 17" shape-rendering="crispEdges"><g fill="#fff"><rect x="1" y="1" width="11" height="1"/><rect x="1" y="1" width="1" height="3"/><rect x="11" y="1" width="1" height="3"/><rect x="1" y="5" width="11" height="1"/><rect x="1" y="11" width="11" height="1"/><rect x="1" y="5" width="1" height="7"/><rect x="11" y="5" width="1" height="7"/><rect x="1" y="15" width="11" height="1"/><rect x="1" y="13" width="1" height="3"/><rect x="11" y="13" width="1" height="3"/><rect x="15" y="1" width="1" height="3"/><rect x="14" y="5" width="3" height="2"/><rect x="15" y="8" width="1" height="8"/></g></svg>
<svg style="left:502px;top:1047px" width="26" height="26" viewBox="0 0 26 26"><defs><linearGradient id="eg1" x1="0" y1="0" x2="1" y2="1"><stop offset="0" stop-color="#35c1f1"/><stop offset="1" stop-color="#1a60c4"/></linearGradient><linearGradient id="eg2" x1="0" y1="0" x2="1" y2="0"><stop offset="0" stop-color="#2aa7e0"/><stop offset="0.55" stop-color="#3dcc90"/><stop offset="1" stop-color="#66d94f"/></linearGradient></defs>
<circle cx="13" cy="13" r="12.2" fill="url(#eg1)"/><path d="M1.6 9.6 Q5 0.8 13.6 0.8 Q23 1.4 25.2 10 Q25.6 15.4 21 16.4 Q16.4 17 16.8 13.6 Q17 10.6 13 9.6 Q8.6 9 6 12.6 Q4 8.8 1.6 9.6 Z" fill="url(#eg2)"/><path d="M6 12.6 Q4.4 18.4 8.6 22.6 Q12 25.6 17 24.4 Q11 22.6 10.4 17.6 Q10.2 12.8 13.4 11.4 Q9 9.4 6 12.6 Z" fill="#1450a8"/><path d="M10.4 17.6 Q12.4 22.8 18.4 22.4 Q22.4 21.6 24 18.4 Q20 20.8 16.8 19.2 Q13.6 17.4 14.4 13.4 Q10.4 13.6 10.4 17.6 Z" fill="#1e3f8f" opacity=".55"/></svg>
<svg style="left:552px;top:1049px" width="24" height="21" viewBox="0 0 24 21"><path d="M0.8 2.2 Q0.8 1.2 1.8 1.2 H8 L9.6 3 H22 Q23 3 23 4 V18.6 H0.8 Z" fill="#e9b32e"/><path d="M0.8 5.2 H23 V18.8 Q23 19.6 22.2 19.6 H1.6 Q0.8 19.6 0.8 18.8 Z" fill="#ffd766"/><path d="M4.8 19.6 V11.8 H18.6 V19.6 H15.4 V15.2 H8 V19.6 Z" fill="#4b8fd6"/><rect x="8" y="15.2" width="7.4" height="4.4" fill="#7db7ee"/></svg>
<svg style="left:600px;top:1047px" width="26" height="25" viewBox="0 0 26 25"><path d="M8.4 8 V5.6 Q8.6 1.4 12.8 1.4 Q17 1.4 17.2 5.6 V8" fill="none" stroke="#fff" stroke-width="1.5"/><path d="M1 7.4 H24.4 V21.6 Q24.4 23.6 22.4 23.6 H3 Q1 23.6 1 21.6 Z" fill="#fff"/><rect x="7.2" y="10.4" width="5" height="5" fill="#f25022"/><rect x="13.2" y="10.4" width="5" height="5" fill="#7fba00"/><rect x="7.2" y="16.4" width="5" height="5" fill="#00a4ef"/><rect x="13.2" y="16.4" width="5" height="5" fill="#ffb900"/></svg>
<svg style="left:649px;top:1049px" width="26" height="21" viewBox="0 0 26 21"><path d="M0.8 8.2 L12.8 1 L24.8 8.2 V19.8 H0.8 Z" fill="#fff"/><path d="M24.8 8.8 L12.6 13 L19.8 17.4 L16.2 13.2 L24.8 10.4 Z" fill="#22343e"/></svg>
<svg style="left:700px;top:1052px" width="22" height="16" viewBox="0 0 22 16"><rect x="0.6" y="0.8" width="20.4" height="14" fill="#86c9f1"/><rect x="0.6" y="0.8" width="20.4" height="14" fill="none" stroke="#5aa9e0" stroke-width="0.8"/><circle cx="6.6" cy="6" r="3.4" fill="#2b83cf"/><path d="M6.6 6 V2.6 A3.4 3.4 0 0 1 10 6 Z" fill="#f3c04a"/><g fill="#e8f4fc"><rect x="12.6" y="2.6" width="6.4" height="1.6"/><rect x="14" y="5.4" width="5" height="1.4"/><rect x="14" y="8" width="5" height="1.4"/></g><rect x="3" y="11.4" width="6" height="1.4" fill="#e9c46a"/><rect x="10.4" y="11.4" width="8.6" height="1.4" fill="#3f93d8"/></svg>
<div style="position:absolute;left:691px;top:1078px;width:40px;height:2px;background:#84bcee;"></div>
<div style="position:absolute;left:736px;top:1040px;width:48px;height:40px;background:#55636d;"></div>
<div style="position:absolute;left:736px;top:1078px;width:48px;height:2px;background:#84bcee;"></div>
<svg style="left:747px;top:1047px" width="26" height="26" viewBox="0 0 26 26"><defs><radialGradient id="tg" cx="45%" cy="30%" r="75%"><stop offset="0" stop-color="#7ea6d6"/><stop offset="0.45" stop-color="#2e5b9a"/><stop offset="1" stop-color="#122a55"/></radialGradient></defs><circle cx="13" cy="13" r="12.2" fill="url(#tg)"/><ellipse cx="13" cy="20" rx="8" ry="4" fill="#6fa0dc" opacity=".55"/><path d="M4 8.6 Q9 2 17 3.4" stroke="#b9d2f0" stroke-width="1" fill="none" opacity=".7"/><path d="M6.6 20 L12.6 13.4 M12.6 13.4 Q11.8 11.4 13.6 9.8 L18.4 5 M12.6 13.4 Q14.6 14.2 16.2 12.6 L20.8 7.6" stroke="#fff" stroke-width="1.7" fill="none" stroke-linecap="round"/></svg>
<svg style="left:796px;top:1047px" width="26" height="26" viewBox="0 0 26 26"><defs><radialGradient id="gg" cx="45%" cy="35%" r="70%"><stop offset="0" stop-color="#3f9a4b"/><stop offset="0.6" stop-color="#1f6b2c"/><stop offset="1" stop-color="#0f4519"/></radialGradient></defs><circle cx="13" cy="13" r="12.2" fill="url(#gg)"/><rect x="6.4" y="7.2" width="13.4" height="11.4" fill="none" stroke="#e6f4e6" stroke-width="1.3"/><rect x="6.4" y="7.2" width="13.4" height="2.6" fill="#e6f4e6"/><rect x="9.4" y="11.8" width="7.4" height="4.6" fill="#3e9a4a" stroke="#9fd3a3" stroke-width="0.7"/></svg>
<div style="position:absolute;left:789px;top:1078px;width:40px;height:2px;background:#84bcee;"></div>
<svg style="left:846px;top:1048px" width="24" height="23" viewBox="0 0 24 23"><defs><linearGradient id="ar" x1="0" y1="0" x2="0" y2="1"><stop offset="0" stop-color="#e81b1b"/><stop offset="1" stop-color="#b30b0b"/></linearGradient></defs><rect x="1.2" y="0.8" width="21" height="20.8" rx="1.4" fill="url(#ar)"/><path d="M5.4 16.6 Q8.6 12.8 10.8 8.6 Q12 6 11.6 4.6 Q11 3.6 10.4 4.6 Q10 6.6 12 10 Q14 13.2 17.4 14 Q19.4 14.2 18.8 13 Q16.6 12 12.4 12.8 Q8.6 13.8 6 16.2 Q4.6 17.8 5.4 16.6 Z" fill="none" stroke="#fff" stroke-width="1.1"/></svg>
<div style="position:absolute;left:838px;top:1078px;width:32px;height:2px;background:#84bcee;"></div>
<div style="position:absolute;left:870px;top:1078px;width:8px;height:2px;background:#5f8fbf;"></div>
<svg style="left:892px;top:1046px" width="30" height="28" viewBox="0 0 30 28"><path d="M3 17.4 Q1.6 11.6 8 8.6 Q15.4 5.6 20.6 9 Q24.6 12.4 21.4 17.6 Q19 21.6 13.4 22.6 Q10.6 22.8 11 20.4 Q11.4 18.2 8.6 18.6 Q4 20 3 17.4 Z" fill="#cfe3f3" stroke="#9fbcd3" stroke-width="0.7"/><circle cx="7.6" cy="14" r="1.7" fill="#d8423a"/><circle cx="10.6" cy="10.6" r="1.6" fill="#6cb84a"/><circle cx="15" cy="9.8" r="1.6" fill="#e6b83a"/><circle cx="13.4" cy="15.6" r="1.5" fill="#2c3e55"/><path d="M14.6 25.4 L21.6 7.6 L23.4 8.4 L16 25.8 Z" fill="#d8913a"/><path d="M21.2 8 L21.6 3.6 Q23.6 1 25.6 2.6 L24 8.8 Z" fill="#e9c493"/></svg>
<div style="position:absolute;left:887px;top:1078px;width:40px;height:2px;background:#84bcee;"></div>
<svg style="left:1604px;top:1051px" width="27" height="18" viewBox="0 0 27 18"><g fill="none" stroke="#fff" stroke-width="1.2"><path d="M3.4 1 H22 V16.6 H3.4 Q1 16.6 1 14 V3.4 Q1 1 3.4 1 Z"/><path d="M22 3.4 H25 V14 Q25 16.6 22.4 16.6"/><rect x="4.4" y="7.2" width="6.4" height="5.6"/><path d="M4.4 4.2 H19 M13 7.6 H19 M13 10 H19 M13 12.6 H19"/></g></svg>
<span style="position:absolute;left:1637.30px;top:1054.00px;font-size:14px;line-height:14px;white-space:pre;letter-spacing:-0.684px;color:#fff;">51°F</span>
<span style="position:absolute;left:1673.40px;top:1054.00px;font-size:14px;line-height:14px;white-space:pre;letter-spacing:-0.608px;color:#fff;">Fog</span>
<svg style="left:1712px;top:1055px" width="14" height="9" viewBox="0 0 14 9"><path d="M1 7.6 L7 1.6 L13 7.6" fill="none" stroke="#fff" stroke-width="1.2"/></svg>
<svg style="left:1736px;top:1051px" width="15" height="18" viewBox="0 0 15 18"><g fill="none" stroke="#fff" stroke-width="1.1"><path d="M3 3 Q7 0.6 11 3"/><path d="M3 15.6 Q7 18 11 15.6"/><rect x="1.4" y="5.6" width="8.4" height="7.4" rx="1.6"/><path d="M9.8 8.4 L13 6.4 V12.2 L9.8 10.4"/></g></svg>
<svg style="left:1758px;top:1051px" width="19" height="19" viewBox="0 0 19 19"><g fill="none" stroke="#fff" stroke-width="1.1"><circle cx="8.6" cy="9" r="7.6"/><ellipse cx="8.6" cy="9" rx="3.4" ry="7.6"/><path d="M1.2 6.4 H16 M1.2 11.6 H11"/></g><circle cx="13.6" cy="14" r="3.6" fill="#1b2b45" stroke="#fff" stroke-width="1.1"/><path d="M11.2 11.6 L16 16.4" stroke="#fff" stroke-width="1.1"/></svg>
<svg style="left:1782px;top:1052px" width="19" height="17" viewBox="0 0 19 17"><g fill="none" stroke="#fff" stroke-width="1.1"><path d="M1 5.8 H3.8 L7.4 2.2 V14.6 L3.8 11 H1 Z"/><path d="M9.8 6 Q11.2 8.4 9.8 10.8"/><path d="M12 3.8 Q14.8 8.4 12 13"/><path d="M14.4 1.6 Q18.4 8.4 14.4 15.2"/></g></svg>
<span style="position:absolute;left:1814.60px;top:1046.00px;font-size:11.5px;line-height:11.5px;white-space:pre;letter-spacing:-0.118px;color:#fff;">1:03 PM</span>
<span style="position:absolute;left:1809.00px;top:1064.00px;font-size:11.5px;line-height:11.5px;white-space:pre;letter-spacing:0.125px;color:#fff;">2/26/2024</span>
<svg style="left:1878px;top:1051px" width="26" height="26" viewBox="0 0 26 26"><path d="M1 1.2 H17 V12.8 H7.4 L3.6 16.4 V12.8 H1 Z" fill="#fff"/><g stroke="#1b2b45" stroke-width="1.1"><path d="M3.6 4.4 H14.4 M3.6 7 H14.4 M3.6 9.6 H11"/></g><circle cx="16.8" cy="16.4" r="7.6" fill="#3a3f4a" stroke="#20242c" stroke-width="0.8"/></svg>
<span style="position:absolute;left:1891.32px;top:1062.00px;font-size:12.5px;line-height:12.5px;white-space:pre;letter-spacing:0.000px;color:#fff;font-weight:700;">2</span>
<div style="position:absolute;left:1915px;top:1040px;width:1px;height:40px;background:#6f7b8b;"></div>
</body></html>
